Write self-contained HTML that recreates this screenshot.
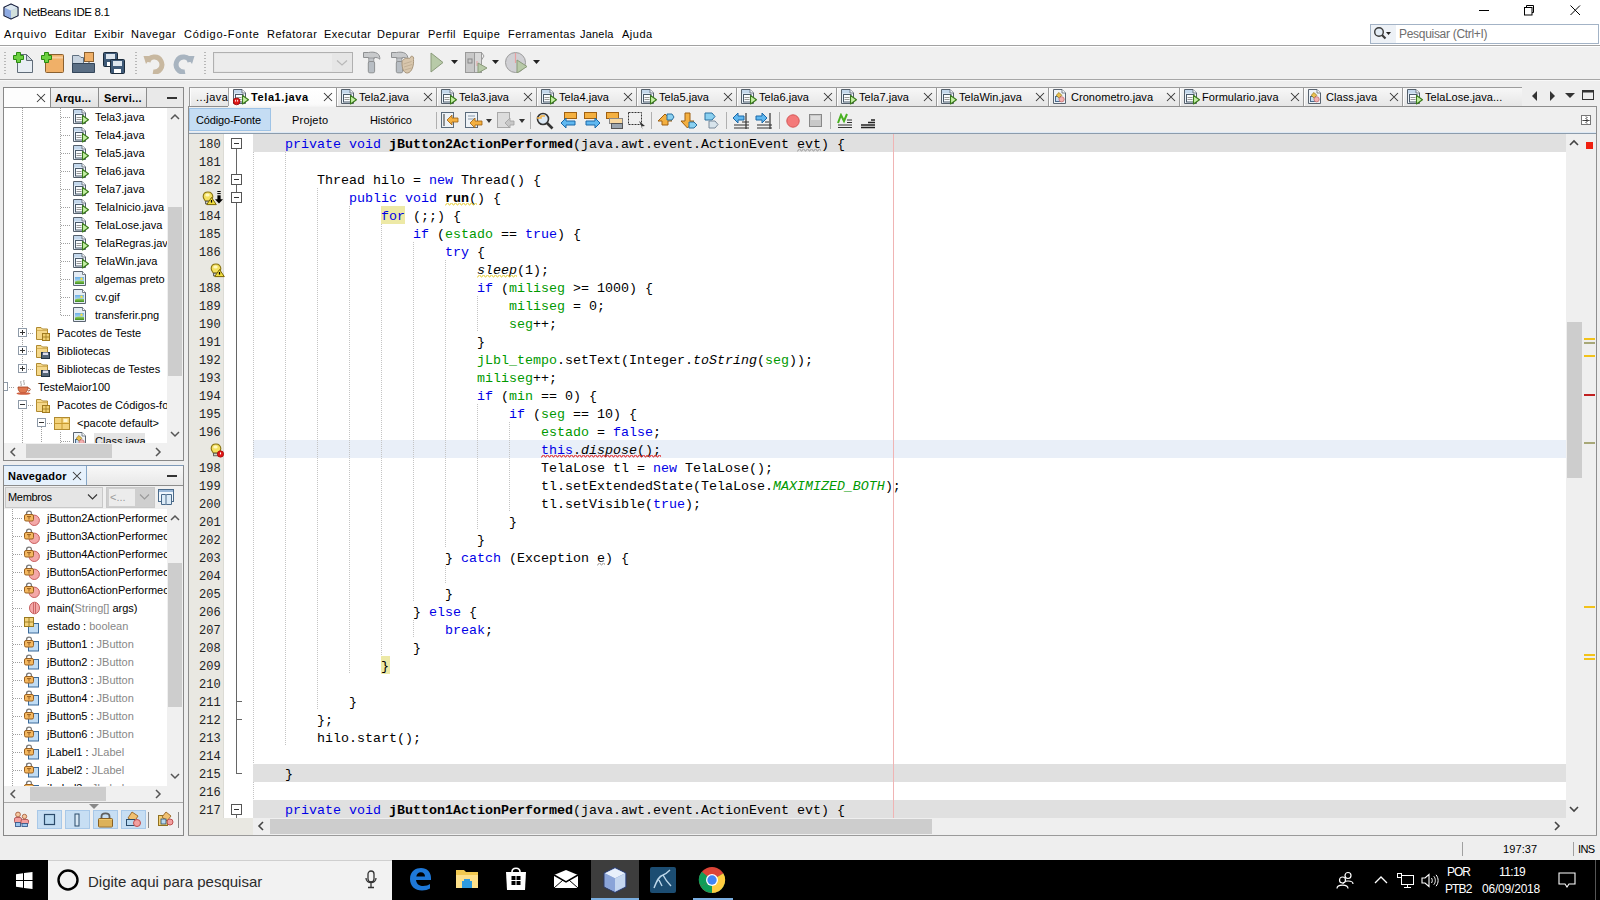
<!DOCTYPE html>
<html><head><meta charset="utf-8"><title>NetBeans IDE 8.1</title>
<style>
html,body{margin:0;padding:0;width:1600px;height:900px;overflow:hidden;background:#eeeeee}
body{position:relative;font-family:"Liberation Sans", sans-serif;}
body>div,body>svg{position:absolute;white-space:pre;box-sizing:border-box}
.k{color:#0000e6}
.f{color:#009900}
.i{font-style:italic}
.b{font-weight:bold}
</style></head><body>
<div style="left:0px;top:0px;width:1600px;height:45px;background:#fff"></div>
<div style="left:0px;top:45px;width:1600px;height:1px;background:#a2a2a2"></div>
<div style="left:0px;top:46px;width:1600px;height:1px;background:#fff"></div>
<div style="left:0px;top:47px;width:1600px;height:32px;background:#f0f0f0"></div>
<div style="left:0px;top:79px;width:1600px;height:1px;background:#a6a6a6"></div>
<div style="left:0px;top:80px;width:1600px;height:1px;background:#f8f8f8"></div>
<div style="left:0px;top:81px;width:1600px;height:779px;background:#eeeeee"></div>
<svg style="left:2px;top:2px;" width="18" height="18" viewBox="0 0 18 18"><path d="M9 2 L16 5.3 V13.7 L9 17 L2 13.7 V5.3 Z" fill="#b8cae8" stroke="#1c2440" stroke-width="1.3" stroke-linejoin="round"/><path d="M9 2.8 L15.3 5.6 L9 8.6 L2.7 5.6 Z" fill="#dde8f0"/><path d="M9 8.8 L15.3 5.9 V13.4 L9 16.3 Z" fill="#d2e0dc"/><path d="M9 8.8 V16.3 L2.7 13.4 V5.9 Z" fill="#8eaae2"/></svg>
<div style="left:23px;top:6px;font-family:'Liberation Sans', sans-serif;font-size:11.5px;line-height:13.800px;letter-spacing:-0.35px;color:#000">NetBeans IDE 8.1</div>
<div style="left:1479px;top:10px;width:10px;height:1px;background:#000"></div>
<svg style="left:1524px;top:5px;" width="11" height="11" viewBox="0 0 11 11"><rect x="0.5" y="2.5" width="7.5" height="7.5" fill="none" stroke="#000"/><path d="M2.5 2.5 V0.5 H9.5 V7.5 H8" fill="none" stroke="#000"/></svg>
<svg style="left:1570px;top:5px;" width="11" height="11" viewBox="0 0 11 11"><path d="M0.5 0.5 L10 10 M10 0.5 L0.5 10" stroke="#000" stroke-width="1"/></svg>
<div style="left:4px;top:28px;font-family:'Liberation Sans', sans-serif;font-size:11px;line-height:13.200px;letter-spacing:0.85px;color:#000">Arquivo</div>
<div style="left:55px;top:28px;font-family:'Liberation Sans', sans-serif;font-size:11px;line-height:13.200px;letter-spacing:0.5px;color:#000">Editar</div>
<div style="left:94px;top:28px;font-family:'Liberation Sans', sans-serif;font-size:11px;line-height:13.200px;letter-spacing:0.5px;color:#000">Exibir</div>
<div style="left:131px;top:28px;font-family:'Liberation Sans', sans-serif;font-size:11px;line-height:13.200px;letter-spacing:0.5px;color:#000">Navegar</div>
<div style="left:184px;top:28px;font-family:'Liberation Sans', sans-serif;font-size:11px;line-height:13.200px;letter-spacing:0.75px;color:#000">Código-Fonte</div>
<div style="left:267px;top:28px;font-family:'Liberation Sans', sans-serif;font-size:11px;line-height:13.200px;letter-spacing:0.5px;color:#000">Refatorar</div>
<div style="left:324px;top:28px;font-family:'Liberation Sans', sans-serif;font-size:11px;line-height:13.200px;letter-spacing:0.5px;color:#000">Executar</div>
<div style="left:377px;top:28px;font-family:'Liberation Sans', sans-serif;font-size:11px;line-height:13.200px;letter-spacing:0.5px;color:#000">Depurar</div>
<div style="left:428px;top:28px;font-family:'Liberation Sans', sans-serif;font-size:11px;line-height:13.200px;letter-spacing:0.5px;color:#000">Perfil</div>
<div style="left:463px;top:28px;font-family:'Liberation Sans', sans-serif;font-size:11px;line-height:13.200px;letter-spacing:0.5px;color:#000">Equipe</div>
<div style="left:508px;top:28px;font-family:'Liberation Sans', sans-serif;font-size:11px;line-height:13.200px;letter-spacing:0.5px;color:#000">Ferramentas</div>
<div style="left:580px;top:28px;font-family:'Liberation Sans', sans-serif;font-size:11px;line-height:13.200px;letter-spacing:0.2px;color:#000">Janela</div>
<div style="left:622px;top:28px;font-family:'Liberation Sans', sans-serif;font-size:11px;line-height:13.200px;letter-spacing:0.5px;color:#000">Ajuda</div>
<div style="left:1370px;top:24px;width:229px;height:20px;background:#fff;border:1px solid #a3b3c6"></div>
<div style="left:1371px;top:25px;width:25px;height:18px;background:#edf1f6"></div>
<svg style="left:1373px;top:26px;" width="22" height="15" viewBox="0 0 22 15"><circle cx="6" cy="6" r="4.3" fill="#e3ecf5" stroke="#3a3a3a" stroke-width="1.4"/><path d="M9 9 L12.5 12.5" stroke="#3a3a3a" stroke-width="2.2"/><path d="M13 6 L18 6 L15.5 9 Z" fill="#222"/></svg>
<div style="left:1399px;top:27px;font-family:'Liberation Sans', sans-serif;font-size:12px;line-height:14.400px;color:#6d6d6d;letter-spacing:-0.3px">Pesquisar (Ctrl+I)</div>
<div style="left:4px;top:52px;width:2px;height:1px;background:#b8b8b8"></div>
<div style="left:4px;top:55px;width:2px;height:1px;background:#b8b8b8"></div>
<div style="left:4px;top:58px;width:2px;height:1px;background:#b8b8b8"></div>
<div style="left:4px;top:61px;width:2px;height:1px;background:#b8b8b8"></div>
<div style="left:4px;top:64px;width:2px;height:1px;background:#b8b8b8"></div>
<div style="left:4px;top:67px;width:2px;height:1px;background:#b8b8b8"></div>
<div style="left:4px;top:70px;width:2px;height:1px;background:#b8b8b8"></div>
<div style="left:4px;top:73px;width:2px;height:1px;background:#b8b8b8"></div>
<div style="left:135px;top:52px;width:2px;height:1px;background:#b8b8b8"></div>
<div style="left:135px;top:55px;width:2px;height:1px;background:#b8b8b8"></div>
<div style="left:135px;top:58px;width:2px;height:1px;background:#b8b8b8"></div>
<div style="left:135px;top:61px;width:2px;height:1px;background:#b8b8b8"></div>
<div style="left:135px;top:64px;width:2px;height:1px;background:#b8b8b8"></div>
<div style="left:135px;top:67px;width:2px;height:1px;background:#b8b8b8"></div>
<div style="left:135px;top:70px;width:2px;height:1px;background:#b8b8b8"></div>
<div style="left:135px;top:73px;width:2px;height:1px;background:#b8b8b8"></div>
<div style="left:204px;top:52px;width:2px;height:1px;background:#b8b8b8"></div>
<div style="left:204px;top:55px;width:2px;height:1px;background:#b8b8b8"></div>
<div style="left:204px;top:58px;width:2px;height:1px;background:#b8b8b8"></div>
<div style="left:204px;top:61px;width:2px;height:1px;background:#b8b8b8"></div>
<div style="left:204px;top:64px;width:2px;height:1px;background:#b8b8b8"></div>
<div style="left:204px;top:67px;width:2px;height:1px;background:#b8b8b8"></div>
<div style="left:204px;top:70px;width:2px;height:1px;background:#b8b8b8"></div>
<div style="left:204px;top:73px;width:2px;height:1px;background:#b8b8b8"></div>
<svg style="left:13px;top:52px;" width="21" height="21" viewBox="0 0 21 21"><path d="M4.5 2.5 H13.5 L19.5 8.5 V20.5 H4.5 Z" fill="#e8eef4" stroke="#606c78"/><path d="M13.5 2.5 V8.5 H19.5 Z" fill="#d0d8e0" stroke="#606c78" stroke-linejoin="round"/><path d="M3.5 0.5 H7.5 V3.5 H10.5 V7.5 H7.5 V10.5 H3.5 V7.5 H0.5 V3.5 H3.5 Z" fill="#6cd040" stroke="#2a8a10"/></svg>
<svg style="left:41px;top:52px;" width="23" height="21" viewBox="0 0 23 21"><rect x="4.5" y="2.5" width="18" height="18" rx="1" fill="#f0b068" stroke="#8a6030"/><path d="M5 5.5 H22" stroke="#f8d0a0" stroke-width="2"/><path d="M3.5 0.5 H7.5 V3.5 H10.5 V7.5 H7.5 V10.5 H3.5 V7.5 H0.5 V3.5 H3.5 Z" fill="#6cd040" stroke="#2a8a10"/></svg>
<svg style="left:72px;top:52px;" width="23" height="21" viewBox="0 0 23 21"><path d="M0.5 3.5 H7 L9 5.5 H11.5 V20.5 H0.5 Z" fill="#c8d4e0" stroke="#607080"/><path d="M0.5 11.5 H22.5 V20.5 H0.5 Z" fill="#5a6e84" stroke="#34465a"/><rect x="12.5" y="0.5" width="9" height="9" fill="#f0b068" stroke="#8a6030"/><path d="M17 9.5 V11.5" stroke="#555"/></svg>
<svg style="left:103px;top:52px;" width="23" height="23" viewBox="0 0 23 23"><rect x="0.5" y="0.5" width="14" height="14" rx="1" fill="#3e5a78" stroke="#1a2a3a"/><rect x="3" y="2" width="9" height="5" fill="#dde6ee"/><rect x="4" y="10" width="7" height="4" fill="#fff"/><rect x="7.5" y="7.5" width="14" height="14" rx="1" fill="#3e5a78" stroke="#1a2a3a"/><rect x="10" y="9" width="9" height="5" fill="#dde6ee"/><rect x="11" y="17" width="7" height="4" fill="#fff"/></svg>
<svg style="left:143px;top:52px;" width="22" height="22" viewBox="0 0 22 22"><path d="M5 10 C6 4 15 3 18 9 C21 15 16 21 10 20" fill="none" stroke="#c8b8a0" stroke-width="5"/><path d="M0.5 4 L9 4 L3 12 Z" fill="#c8b8a0"/></svg>
<svg style="left:173px;top:52px;" width="22" height="22" viewBox="0 0 22 22"><path d="M17 10 C16 4 7 3 4 9 C1 15 6 21 12 20" fill="none" stroke="#a8b4c0" stroke-width="5"/><path d="M21.5 4 L13 4 L19 12 Z" fill="#a8b4c0"/></svg>
<div style="left:213px;top:52px;width:140px;height:21px;background:#e6e6e6;border:1px solid #b0b0b0"></div>
<div style="left:215px;top:54px;width:117px;height:17px;background:#ececec"></div>
<svg style="left:336px;top:59px;" width="12" height="8" viewBox="0 0 12 8"><path d="M1 1.5 L6 6 L11 1.5" fill="none" stroke="#b8b8b8" stroke-width="1.2"/></svg>
<svg style="left:362px;top:51px;" width="20" height="23" viewBox="0 0 20 23"><path d="M1.5 1.5 H6.5 C9 1 13 0.8 15.5 2.5 C17 3.6 18 5.5 17.8 8.2 C16.3 6.8 14.5 6.3 12.3 6.5 V7.5 H6.7 V6.5 H1.5 Z" fill="#c8cacc" stroke="#8e9092"/><rect x="6.8" y="7" width="5" height="4" fill="#c0c4c8" stroke="#8e9092" stroke-width="0.8"/><rect x="6.3" y="10.5" width="6.3" height="11.3" rx="1.5" fill="#b8bec4" stroke="#8e9092"/></svg>
<svg style="left:390px;top:51px;" width="26" height="23" viewBox="0 0 26 23"><path d="M1.5 1.5 H6.5 C9 1 13 0.8 15.5 2.5 C17 3.6 18 5.5 17.8 8.2 C16.3 6.8 14.5 6.3 12.3 6.5 V7.5 H6.7 V6.5 H1.5 Z" fill="#c8cacc" stroke="#8e9092"/><rect x="6.8" y="7" width="5" height="4" fill="#c0c4c8" stroke="#8e9092" stroke-width="0.8"/><rect x="6.3" y="10.5" width="6.3" height="11.3" rx="1.5" fill="#b8bec4" stroke="#8e9092"/><path d="M12 12 C12 8 16 6.5 19.5 7.5 L21.5 5 C23 5 24 6.5 23.5 8.5 C24 14 22 21.5 17.5 22 C13.5 22.3 12 17 12 12 Z" fill="#d8c6ac" stroke="#a8967c"/><path d="M13.5 13 L21.5 10.5 M14 16 L22 13.5 M14.5 19 L21.5 17" stroke="#b8a68c" stroke-width="0.7"/></svg>
<svg style="left:430px;top:52px;" width="14" height="21" viewBox="0 0 14 21"><path d="M1 1 L13 10.5 L1 20 Z" fill="#b8caa8" stroke="#8a9a7a"/></svg>
<svg style="left:451px;top:60px;" width="7" height="4" viewBox="0 0 7 4"><path d="M0 0 H7 L3.5 4 Z" fill="#222"/></svg>
<svg style="left:465px;top:52px;" width="23" height="21" viewBox="0 0 23 21"><rect x="0.5" y="0.5" width="9" height="20" fill="#c8c8c8" stroke="#9a9a9a"/><rect x="9.5" y="0.5" width="7" height="20" fill="#d8d8d8" stroke="#9a9a9a"/><path d="M16.5 0.5 L19 4 L16.5 8" fill="none" stroke="#9a9a9a"/><rect x="3" y="7" width="4" height="4" fill="none" stroke="#888"/><path d="M12 9 V14" stroke="#e8a0a0"/><path d="M13 11 L22 16 L13 21 Z" fill="#b8caa8" stroke="#8a9a7a"/></svg>
<svg style="left:492px;top:60px;" width="7" height="4" viewBox="0 0 7 4"><path d="M0 0 H7 L3.5 4 Z" fill="#222"/></svg>
<svg style="left:505px;top:52px;" width="23" height="21" viewBox="0 0 23 21"><circle cx="10.5" cy="10.5" r="10" fill="#d0d0d4" stroke="#9a9a9a"/><path d="M10.5 1 V11" stroke="#e8a0a0" stroke-width="1.2"/><path d="M12 8 L22 14.5 L12 21 Z" fill="#b8caa8" stroke="#8a9a7a"/></svg>
<svg style="left:533px;top:60px;" width="7" height="4" viewBox="0 0 7 4"><path d="M0 0 H7 L3.5 4 Z" fill="#222"/></svg>
<div style="left:3px;top:87px;width:181px;height:374px;background:#fff;border:1px solid #888"></div>
<div style="left:4px;top:88px;width:179px;height:19px;background:#e9e9e9"></div>
<div style="left:4px;top:107px;width:179px;height:1px;background:#8c8c8c"></div>
<div style="left:4px;top:88px;width:47px;height:19px;background:#fdfdfd;border-right:1px solid #8c8c8c"></div>
<svg style="left:36px;top:93px;" width="10" height="10" viewBox="0 0 10 10"><path d="M1 1 L9 9 M9 1 L1 9" stroke="#333" stroke-width="1.05"/></svg>
<div style="left:51px;top:88px;width:48px;height:19px;background:linear-gradient(#f2f2f2,#e2e2e2);border-right:1px solid #8c8c8c"></div>
<div style="left:55px;top:92px;font-family:'Liberation Sans', sans-serif;font-size:11px;line-height:13.200px;font-weight:bold;color:#000;letter-spacing:0.2px">Arqu...</div>
<div style="left:99px;top:88px;width:48px;height:19px;background:linear-gradient(#f2f2f2,#e2e2e2);border-right:1px solid #8c8c8c"></div>
<div style="left:104px;top:92px;font-family:'Liberation Sans', sans-serif;font-size:11px;line-height:13.200px;font-weight:bold;color:#000;letter-spacing:0.2px">Servi...</div>
<div style="left:167px;top:97px;width:10px;height:2px;background:#333"></div>
<div style="left:4px;top:108px;width:163px;height:335px;background:#fff"></div>
<div style="left:22px;top:108px;width:1px;height:265px;background:repeating-linear-gradient(to bottom,#a0a0a0 0 1px,transparent 1px 2px)"></div>
<div style="left:22px;top:410px;width:1px;height:33px;background:repeating-linear-gradient(to bottom,#a0a0a0 0 1px,transparent 1px 2px)"></div>
<div style="left:60px;top:108px;width:1px;height:207px;background:repeating-linear-gradient(to bottom,#a0a0a0 0 1px,transparent 1px 2px)"></div>
<div style="left:61px;top:117px;width:10px;height:1px;background:repeating-linear-gradient(to right,#a0a0a0 0 1px,transparent 1px 2px)"></div>
<svg style="left:73px;top:109px;" width="17" height="17" viewBox="0 0 17 17"><path d="M0.5 0.5 H9 L12.5 4 V14.5 H0.5 Z" fill="#eef4fa" stroke="#55606c"/><rect x="1" y="1" width="8" height="3.5" fill="#c4d8ec"/><path d="M9 0.5 V4 H12.5" fill="#f4f8fc" stroke="#55606c" stroke-width="0.8"/><rect x="2.5" y="5.5" width="7.5" height="7.5" fill="#fafcfe" stroke="#4a5a6a"/><path d="M3.5 8.5 H8.5 M3.5 10.5 H8.5" stroke="#8a8a8a" stroke-width="0.9"/><path d="M9.5 6.5 L15.5 10.7 L9.5 15 Z" fill="#c4f0a4" stroke="#3a7a1a" stroke-width="1.1" stroke-linejoin="round"/></svg>
<div style="left:95px;top:111px;font-family:'Liberation Sans', sans-serif;font-size:11px;line-height:13.200px;color:#000;letter-spacing:0px">Tela3.java</div>
<div style="left:61px;top:135px;width:10px;height:1px;background:repeating-linear-gradient(to right,#a0a0a0 0 1px,transparent 1px 2px)"></div>
<svg style="left:73px;top:127px;" width="17" height="17" viewBox="0 0 17 17"><path d="M0.5 0.5 H9 L12.5 4 V14.5 H0.5 Z" fill="#eef4fa" stroke="#55606c"/><rect x="1" y="1" width="8" height="3.5" fill="#c4d8ec"/><path d="M9 0.5 V4 H12.5" fill="#f4f8fc" stroke="#55606c" stroke-width="0.8"/><rect x="2.5" y="5.5" width="7.5" height="7.5" fill="#fafcfe" stroke="#4a5a6a"/><path d="M3.5 8.5 H8.5 M3.5 10.5 H8.5" stroke="#8a8a8a" stroke-width="0.9"/><path d="M9.5 6.5 L15.5 10.7 L9.5 15 Z" fill="#c4f0a4" stroke="#3a7a1a" stroke-width="1.1" stroke-linejoin="round"/></svg>
<div style="left:95px;top:129px;font-family:'Liberation Sans', sans-serif;font-size:11px;line-height:13.200px;color:#000;letter-spacing:0px">Tela4.java</div>
<div style="left:61px;top:153px;width:10px;height:1px;background:repeating-linear-gradient(to right,#a0a0a0 0 1px,transparent 1px 2px)"></div>
<svg style="left:73px;top:145px;" width="17" height="17" viewBox="0 0 17 17"><path d="M0.5 0.5 H9 L12.5 4 V14.5 H0.5 Z" fill="#eef4fa" stroke="#55606c"/><rect x="1" y="1" width="8" height="3.5" fill="#c4d8ec"/><path d="M9 0.5 V4 H12.5" fill="#f4f8fc" stroke="#55606c" stroke-width="0.8"/><rect x="2.5" y="5.5" width="7.5" height="7.5" fill="#fafcfe" stroke="#4a5a6a"/><path d="M3.5 8.5 H8.5 M3.5 10.5 H8.5" stroke="#8a8a8a" stroke-width="0.9"/><path d="M9.5 6.5 L15.5 10.7 L9.5 15 Z" fill="#c4f0a4" stroke="#3a7a1a" stroke-width="1.1" stroke-linejoin="round"/></svg>
<div style="left:95px;top:147px;font-family:'Liberation Sans', sans-serif;font-size:11px;line-height:13.200px;color:#000;letter-spacing:0px">Tela5.java</div>
<div style="left:61px;top:171px;width:10px;height:1px;background:repeating-linear-gradient(to right,#a0a0a0 0 1px,transparent 1px 2px)"></div>
<svg style="left:73px;top:163px;" width="17" height="17" viewBox="0 0 17 17"><path d="M0.5 0.5 H9 L12.5 4 V14.5 H0.5 Z" fill="#eef4fa" stroke="#55606c"/><rect x="1" y="1" width="8" height="3.5" fill="#c4d8ec"/><path d="M9 0.5 V4 H12.5" fill="#f4f8fc" stroke="#55606c" stroke-width="0.8"/><rect x="2.5" y="5.5" width="7.5" height="7.5" fill="#fafcfe" stroke="#4a5a6a"/><path d="M3.5 8.5 H8.5 M3.5 10.5 H8.5" stroke="#8a8a8a" stroke-width="0.9"/><path d="M9.5 6.5 L15.5 10.7 L9.5 15 Z" fill="#c4f0a4" stroke="#3a7a1a" stroke-width="1.1" stroke-linejoin="round"/></svg>
<div style="left:95px;top:165px;font-family:'Liberation Sans', sans-serif;font-size:11px;line-height:13.200px;color:#000;letter-spacing:0px">Tela6.java</div>
<div style="left:61px;top:189px;width:10px;height:1px;background:repeating-linear-gradient(to right,#a0a0a0 0 1px,transparent 1px 2px)"></div>
<svg style="left:73px;top:181px;" width="17" height="17" viewBox="0 0 17 17"><path d="M0.5 0.5 H9 L12.5 4 V14.5 H0.5 Z" fill="#eef4fa" stroke="#55606c"/><rect x="1" y="1" width="8" height="3.5" fill="#c4d8ec"/><path d="M9 0.5 V4 H12.5" fill="#f4f8fc" stroke="#55606c" stroke-width="0.8"/><rect x="2.5" y="5.5" width="7.5" height="7.5" fill="#fafcfe" stroke="#4a5a6a"/><path d="M3.5 8.5 H8.5 M3.5 10.5 H8.5" stroke="#8a8a8a" stroke-width="0.9"/><path d="M9.5 6.5 L15.5 10.7 L9.5 15 Z" fill="#c4f0a4" stroke="#3a7a1a" stroke-width="1.1" stroke-linejoin="round"/></svg>
<div style="left:95px;top:183px;font-family:'Liberation Sans', sans-serif;font-size:11px;line-height:13.200px;color:#000;letter-spacing:0px">Tela7.java</div>
<div style="left:61px;top:207px;width:10px;height:1px;background:repeating-linear-gradient(to right,#a0a0a0 0 1px,transparent 1px 2px)"></div>
<svg style="left:73px;top:199px;" width="17" height="17" viewBox="0 0 17 17"><path d="M0.5 0.5 H9 L12.5 4 V14.5 H0.5 Z" fill="#eef4fa" stroke="#55606c"/><rect x="1" y="1" width="8" height="3.5" fill="#c4d8ec"/><path d="M9 0.5 V4 H12.5" fill="#f4f8fc" stroke="#55606c" stroke-width="0.8"/><rect x="2.5" y="5.5" width="7.5" height="7.5" fill="#fafcfe" stroke="#4a5a6a"/><path d="M3.5 8.5 H8.5 M3.5 10.5 H8.5" stroke="#8a8a8a" stroke-width="0.9"/><path d="M9.5 6.5 L15.5 10.7 L9.5 15 Z" fill="#c4f0a4" stroke="#3a7a1a" stroke-width="1.1" stroke-linejoin="round"/></svg>
<div style="left:95px;top:201px;font-family:'Liberation Sans', sans-serif;font-size:11px;line-height:13.200px;color:#000;letter-spacing:0px">TelaInicio.java</div>
<div style="left:61px;top:225px;width:10px;height:1px;background:repeating-linear-gradient(to right,#a0a0a0 0 1px,transparent 1px 2px)"></div>
<svg style="left:73px;top:217px;" width="17" height="17" viewBox="0 0 17 17"><path d="M0.5 0.5 H9 L12.5 4 V14.5 H0.5 Z" fill="#eef4fa" stroke="#55606c"/><rect x="1" y="1" width="8" height="3.5" fill="#c4d8ec"/><path d="M9 0.5 V4 H12.5" fill="#f4f8fc" stroke="#55606c" stroke-width="0.8"/><rect x="2.5" y="5.5" width="7.5" height="7.5" fill="#fafcfe" stroke="#4a5a6a"/><path d="M3.5 8.5 H8.5 M3.5 10.5 H8.5" stroke="#8a8a8a" stroke-width="0.9"/><path d="M9.5 6.5 L15.5 10.7 L9.5 15 Z" fill="#c4f0a4" stroke="#3a7a1a" stroke-width="1.1" stroke-linejoin="round"/></svg>
<div style="left:95px;top:219px;font-family:'Liberation Sans', sans-serif;font-size:11px;line-height:13.200px;color:#000;letter-spacing:0px">TelaLose.java</div>
<div style="left:61px;top:243px;width:10px;height:1px;background:repeating-linear-gradient(to right,#a0a0a0 0 1px,transparent 1px 2px)"></div>
<svg style="left:73px;top:235px;" width="17" height="17" viewBox="0 0 17 17"><path d="M0.5 0.5 H9 L12.5 4 V14.5 H0.5 Z" fill="#eef4fa" stroke="#55606c"/><rect x="1" y="1" width="8" height="3.5" fill="#c4d8ec"/><path d="M9 0.5 V4 H12.5" fill="#f4f8fc" stroke="#55606c" stroke-width="0.8"/><rect x="2.5" y="5.5" width="7.5" height="7.5" fill="#fafcfe" stroke="#4a5a6a"/><path d="M3.5 8.5 H8.5 M3.5 10.5 H8.5" stroke="#8a8a8a" stroke-width="0.9"/><path d="M9.5 6.5 L15.5 10.7 L9.5 15 Z" fill="#c4f0a4" stroke="#3a7a1a" stroke-width="1.1" stroke-linejoin="round"/></svg>
<div style="left:95px;top:237px;font-family:'Liberation Sans', sans-serif;font-size:11px;line-height:13.200px;color:#000;letter-spacing:0px">TelaRegras.jav</div>
<div style="left:61px;top:261px;width:10px;height:1px;background:repeating-linear-gradient(to right,#a0a0a0 0 1px,transparent 1px 2px)"></div>
<svg style="left:73px;top:253px;" width="17" height="17" viewBox="0 0 17 17"><path d="M0.5 0.5 H9 L12.5 4 V14.5 H0.5 Z" fill="#eef4fa" stroke="#55606c"/><rect x="1" y="1" width="8" height="3.5" fill="#c4d8ec"/><path d="M9 0.5 V4 H12.5" fill="#f4f8fc" stroke="#55606c" stroke-width="0.8"/><rect x="2.5" y="5.5" width="7.5" height="7.5" fill="#fafcfe" stroke="#4a5a6a"/><path d="M3.5 8.5 H8.5 M3.5 10.5 H8.5" stroke="#8a8a8a" stroke-width="0.9"/><path d="M9.5 6.5 L15.5 10.7 L9.5 15 Z" fill="#c4f0a4" stroke="#3a7a1a" stroke-width="1.1" stroke-linejoin="round"/></svg>
<div style="left:95px;top:255px;font-family:'Liberation Sans', sans-serif;font-size:11px;line-height:13.200px;color:#000;letter-spacing:0px">TelaWin.java</div>
<div style="left:61px;top:279px;width:10px;height:1px;background:repeating-linear-gradient(to right,#a0a0a0 0 1px,transparent 1px 2px)"></div>
<svg style="left:73px;top:271px;" width="16" height="16" viewBox="0 0 16 16"><defs><linearGradient id="sky" x1="0" y1="0" x2="0" y2="1"><stop offset="0" stop-color="#6ab0e8"/><stop offset="1" stop-color="#d8ecf8"/></linearGradient><linearGradient id="grs" x1="0" y1="0" x2="0" y2="1"><stop offset="0" stop-color="#a0d860"/><stop offset="1" stop-color="#3a8a20"/></linearGradient></defs><path d="M0.5 0.5 H9.5 L12.5 3.5 V14.5 H0.5 Z" fill="#e4ecf4" stroke="#5a6470"/><path d="M9.5 0.5 V3.5 H12.5" fill="#fff" stroke="#5a6470" stroke-width="0.8"/><rect x="2" y="6" width="9" height="7" fill="url(#sky)"/><path d="M2 13 V10.5 C5 9 8 9.5 11 10 V13 Z" fill="url(#grs)"/><circle cx="8.5" cy="7.8" r="1.2" fill="#f8e040"/></svg>
<div style="left:95px;top:273px;font-family:'Liberation Sans', sans-serif;font-size:11px;line-height:13.200px;color:#000;letter-spacing:0px">algemas preto</div>
<div style="left:61px;top:297px;width:10px;height:1px;background:repeating-linear-gradient(to right,#a0a0a0 0 1px,transparent 1px 2px)"></div>
<svg style="left:73px;top:289px;" width="16" height="16" viewBox="0 0 16 16"><defs><linearGradient id="sky" x1="0" y1="0" x2="0" y2="1"><stop offset="0" stop-color="#6ab0e8"/><stop offset="1" stop-color="#d8ecf8"/></linearGradient><linearGradient id="grs" x1="0" y1="0" x2="0" y2="1"><stop offset="0" stop-color="#a0d860"/><stop offset="1" stop-color="#3a8a20"/></linearGradient></defs><path d="M0.5 0.5 H9.5 L12.5 3.5 V14.5 H0.5 Z" fill="#e4ecf4" stroke="#5a6470"/><path d="M9.5 0.5 V3.5 H12.5" fill="#fff" stroke="#5a6470" stroke-width="0.8"/><rect x="2" y="6" width="9" height="7" fill="url(#sky)"/><path d="M2 13 V10.5 C5 9 8 9.5 11 10 V13 Z" fill="url(#grs)"/><circle cx="8.5" cy="7.8" r="1.2" fill="#f8e040"/></svg>
<div style="left:95px;top:291px;font-family:'Liberation Sans', sans-serif;font-size:11px;line-height:13.200px;color:#000;letter-spacing:0px">cv.gif</div>
<div style="left:61px;top:315px;width:10px;height:1px;background:repeating-linear-gradient(to right,#a0a0a0 0 1px,transparent 1px 2px)"></div>
<svg style="left:73px;top:307px;" width="16" height="16" viewBox="0 0 16 16"><defs><linearGradient id="sky" x1="0" y1="0" x2="0" y2="1"><stop offset="0" stop-color="#6ab0e8"/><stop offset="1" stop-color="#d8ecf8"/></linearGradient><linearGradient id="grs" x1="0" y1="0" x2="0" y2="1"><stop offset="0" stop-color="#a0d860"/><stop offset="1" stop-color="#3a8a20"/></linearGradient></defs><path d="M0.5 0.5 H9.5 L12.5 3.5 V14.5 H0.5 Z" fill="#e4ecf4" stroke="#5a6470"/><path d="M9.5 0.5 V3.5 H12.5" fill="#fff" stroke="#5a6470" stroke-width="0.8"/><rect x="2" y="6" width="9" height="7" fill="url(#sky)"/><path d="M2 13 V10.5 C5 9 8 9.5 11 10 V13 Z" fill="url(#grs)"/><circle cx="8.5" cy="7.8" r="1.2" fill="#f8e040"/></svg>
<div style="left:95px;top:309px;font-family:'Liberation Sans', sans-serif;font-size:11px;line-height:13.200px;color:#000;letter-spacing:0px">transferir.png</div>
<svg style="left:18px;top:328px;" width="9" height="9" viewBox="0 0 9 9"><rect x="0.5" y="0.5" width="8" height="8" fill="#fff" stroke="#8e9aa8"/><path d="M2 4.5 H7" stroke="#333"/><path d="M4.5 2 V7" stroke="#333"/></svg>
<div style="left:28px;top:333px;width:6px;height:1px;background:repeating-linear-gradient(to right,#a0a0a0 0 1px,transparent 1px 2px)"></div>
<svg style="left:35px;top:325px;" width="16" height="16" viewBox="0 0 16 16"><path d="M1.5 2.5 H6 L7.5 4 H12.5 V14.5 H1.5 Z" fill="#f5d88a" stroke="#b08a30"/><path d="M1.5 5.5 H12.5" stroke="#c8a040" stroke-width="0.7"/><rect x="7.5" y="8.5" width="7" height="7" fill="#f0d070" stroke="#a07a20"/><path d="M7.5 12 H14.5 M11 8.5 V15.5" stroke="#a07a20" stroke-width="0.8"/></svg>
<div style="left:57px;top:327px;font-family:'Liberation Sans', sans-serif;font-size:11px;line-height:13.200px;color:#000;letter-spacing:0px">Pacotes de Teste</div>
<svg style="left:18px;top:346px;" width="9" height="9" viewBox="0 0 9 9"><rect x="0.5" y="0.5" width="8" height="8" fill="#fff" stroke="#8e9aa8"/><path d="M2 4.5 H7" stroke="#333"/><path d="M4.5 2 V7" stroke="#333"/></svg>
<div style="left:28px;top:351px;width:6px;height:1px;background:repeating-linear-gradient(to right,#a0a0a0 0 1px,transparent 1px 2px)"></div>
<svg style="left:35px;top:343px;" width="16" height="16" viewBox="0 0 16 16"><path d="M1.5 2.5 H6 L7.5 4 H12.5 V14.5 H1.5 Z" fill="#f5d88a" stroke="#b08a30"/><path d="M1.5 5.5 H12.5" stroke="#c8a040" stroke-width="0.7"/><rect x="6.5" y="9.5" width="8" height="6" fill="#556677" stroke="#223344"/><rect x="8" y="9.5" width="5" height="2.5" fill="#dde"/></svg>
<div style="left:57px;top:345px;font-family:'Liberation Sans', sans-serif;font-size:11px;line-height:13.200px;color:#000;letter-spacing:0px">Bibliotecas</div>
<svg style="left:18px;top:364px;" width="9" height="9" viewBox="0 0 9 9"><rect x="0.5" y="0.5" width="8" height="8" fill="#fff" stroke="#8e9aa8"/><path d="M2 4.5 H7" stroke="#333"/><path d="M4.5 2 V7" stroke="#333"/></svg>
<div style="left:28px;top:369px;width:6px;height:1px;background:repeating-linear-gradient(to right,#a0a0a0 0 1px,transparent 1px 2px)"></div>
<svg style="left:35px;top:361px;" width="16" height="16" viewBox="0 0 16 16"><path d="M1.5 2.5 H6 L7.5 4 H12.5 V14.5 H1.5 Z" fill="#f5d88a" stroke="#b08a30"/><path d="M1.5 5.5 H12.5" stroke="#c8a040" stroke-width="0.7"/><rect x="6.5" y="9.5" width="8" height="6" fill="#556677" stroke="#223344"/><rect x="8" y="9.5" width="5" height="2.5" fill="#dde"/></svg>
<div style="left:57px;top:363px;font-family:'Liberation Sans', sans-serif;font-size:11px;line-height:13.200px;color:#000;letter-spacing:0px">Bibliotecas de Testes</div>
<div style="left:4px;top:382px;width:4px;height:9px;background:#fff;border:1px solid #8e9aa8;border-left:none"></div>
<div style="left:9px;top:387px;width:6px;height:1px;background:repeating-linear-gradient(to right,#a0a0a0 0 1px,transparent 1px 2px)"></div>
<svg style="left:16px;top:379px;" width="17" height="16" viewBox="0 0 17 16"><path d="M2 8 H12 C12 12 10 14 7 14 C4 14 2 12 2 8 Z" fill="#e07850" stroke="#a04020" stroke-width="0.8"/><path d="M12 9 C15 9 15 12 12 12" fill="none" stroke="#a04020"/><ellipse cx="7.5" cy="14.5" rx="7" ry="1.3" fill="#d06040"/><path d="M5 2 C4 4 6 5 5 7 M8 1 C7 3 9 4 8 6" stroke="#888" fill="none" stroke-width="0.8"/></svg>
<div style="left:38px;top:381px;font-family:'Liberation Sans', sans-serif;font-size:11px;line-height:13.200px;color:#000;letter-spacing:0px">TesteMaior100</div>
<svg style="left:18px;top:400px;" width="9" height="9" viewBox="0 0 9 9"><rect x="0.5" y="0.5" width="8" height="8" fill="#fff" stroke="#8e9aa8"/><path d="M2 4.5 H7" stroke="#333"/></svg>
<div style="left:28px;top:405px;width:6px;height:1px;background:repeating-linear-gradient(to right,#a0a0a0 0 1px,transparent 1px 2px)"></div>
<svg style="left:35px;top:397px;" width="16" height="16" viewBox="0 0 16 16"><path d="M1.5 2.5 H6 L7.5 4 H12.5 V14.5 H1.5 Z" fill="#f5d88a" stroke="#b08a30"/><path d="M1.5 5.5 H12.5" stroke="#c8a040" stroke-width="0.7"/><rect x="7.5" y="8.5" width="7" height="7" fill="#f0d070" stroke="#a07a20"/><path d="M7.5 12 H14.5 M11 8.5 V15.5" stroke="#a07a20" stroke-width="0.8"/></svg>
<div style="left:57px;top:399px;font-family:'Liberation Sans', sans-serif;font-size:11px;line-height:13.200px;color:#000;letter-spacing:0px">Pacotes de Códigos-fo</div>
<div style="left:41px;top:427px;width:1px;height:16px;background:repeating-linear-gradient(to bottom,#a0a0a0 0 1px,transparent 1px 2px)"></div>
<svg style="left:37px;top:418px;" width="9" height="9" viewBox="0 0 9 9"><rect x="0.5" y="0.5" width="8" height="8" fill="#fff" stroke="#8e9aa8"/><path d="M2 4.5 H7" stroke="#333"/></svg>
<div style="left:47px;top:423px;width:6px;height:1px;background:repeating-linear-gradient(to right,#a0a0a0 0 1px,transparent 1px 2px)"></div>
<svg style="left:54px;top:415px;" width="16" height="16" viewBox="0 0 16 16"><rect x="0.5" y="2.5" width="15" height="12" fill="#f3d27a" stroke="#b08a30"/><path d="M0.5 8.5 H15.5 M8 2.5 V14.5" stroke="#c89a30"/><rect x="9.5" y="4" width="4" height="3" fill="#fff6d0"/></svg>
<div style="left:77px;top:417px;font-family:'Liberation Sans', sans-serif;font-size:11px;line-height:13.200px;color:#000;letter-spacing:0px">&lt;pacote default&gt;</div>
<div style="left:60px;top:432px;width:1px;height:11px;background:repeating-linear-gradient(to bottom,#a0a0a0 0 1px,transparent 1px 2px)"></div>
<div style="left:61px;top:441px;width:10px;height:1px;background:repeating-linear-gradient(to right,#a0a0a0 0 1px,transparent 1px 2px)"></div>
<div style="left:94px;top:433px;width:51px;height:10px;background:#e4e4e4"></div>
<svg style="left:73px;top:432px;" width="17" height="17" viewBox="0 0 17 17"><path d="M0.5 0.5 H9 L12.5 4 V14.5 H0.5 Z" fill="#eef3f8" stroke="#5a6470"/><path d="M9 0.5 V4 H12.5" fill="#fafcfe" stroke="#5a6470" stroke-width="0.8"/><rect x="2.5" y="7.5" width="5" height="5" fill="#c8dcf0" stroke="#4a6a8a"/><path d="M6 3.5 L8.8 6.3 L6 9.1 L3.2 6.3 Z" fill="#e8c050" stroke="#9a7a20" stroke-width="0.8"/><circle cx="8.6" cy="10.3" r="2.6" fill="#f4b0b0" stroke="#c07070" stroke-width="0.8"/></svg>
<div style="left:95px;top:435px;font-family:'Liberation Sans', sans-serif;font-size:11px;line-height:13.200px;color:#000;letter-spacing:0px">Class.java</div>
<div style="left:4px;top:443px;width:163px;height:17px;background:#fff"></div>
<div style="left:167px;top:108px;width:16px;height:335px;background:#f0f0f0"></div>
<svg style="left:170px;top:113px;" width="10" height="8" viewBox="0 0 10 8"><path d="M1 6 L5 2 L9 6" fill="none" stroke="#555" stroke-width="1.5"/></svg>
<svg style="left:170px;top:430px;" width="10" height="8" viewBox="0 0 10 8"><path d="M1 2 L5 6 L9 2" fill="none" stroke="#555" stroke-width="1.5"/></svg>
<div style="left:168px;top:207px;width:14px;height:169px;background:#cdcdcd"></div>
<div style="left:4px;top:443px;width:179px;height:17px;background:#f0f0f0"></div>
<svg style="left:9px;top:447px;" width="8" height="10" viewBox="0 0 8 10"><path d="M6 1 L2 5 L6 9" fill="none" stroke="#555" stroke-width="1.5"/></svg>
<svg style="left:154px;top:447px;" width="8" height="10" viewBox="0 0 8 10"><path d="M2 1 L6 5 L2 9" fill="none" stroke="#555" stroke-width="1.5"/></svg>
<div style="left:26px;top:444px;width:86px;height:14px;background:#cdcdcd"></div>
<div style="left:3px;top:465px;width:181px;height:371px;background:#fff;border:1px solid #888;border-top-color:#7f9ab8"></div>
<div style="left:4px;top:466px;width:179px;height:19px;background:linear-gradient(#f8f8f8,#e8e8e8)"></div>
<div style="left:4px;top:466px;width:83px;height:19px;background:#e6f1fc;border-right:1px solid #86a6c6"></div>
<div style="left:8px;top:470px;font-family:'Liberation Sans', sans-serif;font-size:11px;line-height:13.200px;font-weight:bold;color:#000;letter-spacing:0.2px">Navegador</div>
<svg style="left:72px;top:471px;" width="10" height="10" viewBox="0 0 10 10"><path d="M1 1 L9 9 M9 1 L1 9" stroke="#333" stroke-width="1.05"/></svg>
<div style="left:167px;top:475px;width:10px;height:2px;background:#333"></div>
<div style="left:4px;top:485px;width:179px;height:1px;background:#8c8c8c"></div>
<div style="left:4px;top:486px;width:179px;height:23px;background:#f0f0f0"></div>
<div style="left:5px;top:487px;width:98px;height:21px;background:#e5e5e5;border:1px solid #c8c8c8"></div>
<div style="left:8px;top:491px;font-family:'Liberation Sans', sans-serif;font-size:11px;line-height:13.200px;color:#000;letter-spacing:-0.3px">Membros</div>
<svg style="left:87px;top:493px;" width="11" height="8" viewBox="0 0 11 8"><path d="M1 1.5 L5.5 6 L10 1.5" fill="none" stroke="#333" stroke-width="1.1"/></svg>
<div style="left:106px;top:487px;width:49px;height:21px;background:#cfcfcf;border:1px solid #c8c8c8"></div>
<div style="left:109px;top:489px;width:26px;height:17px;background:#ececec"></div>
<div style="left:110px;top:491px;font-family:'Liberation Sans', sans-serif;font-size:11px;line-height:13.200px;color:#9a9a9a">&lt;...</div>
<svg style="left:139px;top:493px;" width="11" height="8" viewBox="0 0 11 8"><path d="M1 1.5 L5.5 6 L10 1.5" fill="none" stroke="#999" stroke-width="1.1"/></svg>
<svg style="left:158px;top:489px;" width="17" height="17" viewBox="0 0 17 17"><rect x="0.5" y="0.5" width="15" height="12" fill="#f0f6fc" stroke="#4a6a8a"/><rect x="1" y="1" width="14" height="2" fill="#9ab8d8"/><path d="M3.5 5.5 H7.5 C8 5.5 8 6 8 6.5 C8 6 8 5.5 8.5 5.5 H13.5 V15.5 H8.5 C8 15.5 8 16 8 16 C8 16 8 15.5 7.5 15.5 H3.5 Z" fill="#dcebf7" stroke="#4a6a8a"/><path d="M8 6.5 V15.5" stroke="#4a6a8a"/></svg>
<div style="left:4px;top:509px;width:163px;height:277px;background:#fff"></div>
<div style="left:12px;top:509px;width:1px;height:277px;background:repeating-linear-gradient(to bottom,#a0a0a0 0 1px,transparent 1px 2px)"></div>
<div style="left:13px;top:518px;width:10px;height:1px;background:repeating-linear-gradient(to right,#a0a0a0 0 1px,transparent 1px 2px)"></div>
<svg style="left:23px;top:509px;" width="18" height="17" viewBox="0 0 18 17"><circle cx="11.2" cy="11.3" r="5.2" fill="#f4a8a8" stroke="#c86060"/><path d="M3.6 6 V4.2 C3.6 1.3 8.4 1.3 8.4 4.2 V6" fill="none" stroke="#7a7a7a" stroke-width="1.3"/><rect x="1.5" y="5.5" width="9" height="6.5" rx="1.5" fill="#f4b860" stroke="#9a6020"/><path d="M4 7.6 H8 M6 7.6 V10.6" stroke="#9a6020" stroke-width="1"/></svg>
<div style="left:47px;top:512px;font-family:'Liberation Sans', sans-serif;font-size:11px;line-height:13.200px;color:#000;letter-spacing:0px">jButton2ActionPerformec</div>
<div style="left:13px;top:536px;width:10px;height:1px;background:repeating-linear-gradient(to right,#a0a0a0 0 1px,transparent 1px 2px)"></div>
<svg style="left:23px;top:527px;" width="18" height="17" viewBox="0 0 18 17"><circle cx="11.2" cy="11.3" r="5.2" fill="#f4a8a8" stroke="#c86060"/><path d="M3.6 6 V4.2 C3.6 1.3 8.4 1.3 8.4 4.2 V6" fill="none" stroke="#7a7a7a" stroke-width="1.3"/><rect x="1.5" y="5.5" width="9" height="6.5" rx="1.5" fill="#f4b860" stroke="#9a6020"/><path d="M4 7.6 H8 M6 7.6 V10.6" stroke="#9a6020" stroke-width="1"/></svg>
<div style="left:47px;top:530px;font-family:'Liberation Sans', sans-serif;font-size:11px;line-height:13.200px;color:#000;letter-spacing:0px">jButton3ActionPerformec</div>
<div style="left:13px;top:554px;width:10px;height:1px;background:repeating-linear-gradient(to right,#a0a0a0 0 1px,transparent 1px 2px)"></div>
<svg style="left:23px;top:545px;" width="18" height="17" viewBox="0 0 18 17"><circle cx="11.2" cy="11.3" r="5.2" fill="#f4a8a8" stroke="#c86060"/><path d="M3.6 6 V4.2 C3.6 1.3 8.4 1.3 8.4 4.2 V6" fill="none" stroke="#7a7a7a" stroke-width="1.3"/><rect x="1.5" y="5.5" width="9" height="6.5" rx="1.5" fill="#f4b860" stroke="#9a6020"/><path d="M4 7.6 H8 M6 7.6 V10.6" stroke="#9a6020" stroke-width="1"/></svg>
<div style="left:47px;top:548px;font-family:'Liberation Sans', sans-serif;font-size:11px;line-height:13.200px;color:#000;letter-spacing:0px">jButton4ActionPerformec</div>
<div style="left:13px;top:572px;width:10px;height:1px;background:repeating-linear-gradient(to right,#a0a0a0 0 1px,transparent 1px 2px)"></div>
<svg style="left:23px;top:563px;" width="18" height="17" viewBox="0 0 18 17"><circle cx="11.2" cy="11.3" r="5.2" fill="#f4a8a8" stroke="#c86060"/><path d="M3.6 6 V4.2 C3.6 1.3 8.4 1.3 8.4 4.2 V6" fill="none" stroke="#7a7a7a" stroke-width="1.3"/><rect x="1.5" y="5.5" width="9" height="6.5" rx="1.5" fill="#f4b860" stroke="#9a6020"/><path d="M4 7.6 H8 M6 7.6 V10.6" stroke="#9a6020" stroke-width="1"/></svg>
<div style="left:47px;top:566px;font-family:'Liberation Sans', sans-serif;font-size:11px;line-height:13.200px;color:#000;letter-spacing:0px">jButton5ActionPerformec</div>
<div style="left:13px;top:590px;width:10px;height:1px;background:repeating-linear-gradient(to right,#a0a0a0 0 1px,transparent 1px 2px)"></div>
<svg style="left:23px;top:581px;" width="18" height="17" viewBox="0 0 18 17"><circle cx="11.2" cy="11.3" r="5.2" fill="#f4a8a8" stroke="#c86060"/><path d="M3.6 6 V4.2 C3.6 1.3 8.4 1.3 8.4 4.2 V6" fill="none" stroke="#7a7a7a" stroke-width="1.3"/><rect x="1.5" y="5.5" width="9" height="6.5" rx="1.5" fill="#f4b860" stroke="#9a6020"/><path d="M4 7.6 H8 M6 7.6 V10.6" stroke="#9a6020" stroke-width="1"/></svg>
<div style="left:47px;top:584px;font-family:'Liberation Sans', sans-serif;font-size:11px;line-height:13.200px;color:#000;letter-spacing:0px">jButton6ActionPerformec</div>
<div style="left:13px;top:608px;width:10px;height:1px;background:repeating-linear-gradient(to right,#a0a0a0 0 1px,transparent 1px 2px)"></div>
<svg style="left:28px;top:601px;" width="13" height="14" viewBox="0 0 13 14"><ellipse cx="6.5" cy="7" rx="5" ry="5.8" fill="#f4a8a8" stroke="#c86060"/><path d="M5.5 1.5 V12.5 M7.5 1.5 V12.5" stroke="#c86060" stroke-width="0.9"/></svg>
<div style="left:47px;top:602px;font-family:'Liberation Sans', sans-serif;font-size:11px;line-height:13.200px;color:#000;letter-spacing:0px">main(<span style='color:#888'>String[]</span> args)</div>
<div style="left:13px;top:626px;width:10px;height:1px;background:repeating-linear-gradient(to right,#a0a0a0 0 1px,transparent 1px 2px)"></div>
<svg style="left:23px;top:617px;" width="17" height="17" viewBox="0 0 17 17"><rect x="5.5" y="6.5" width="10" height="9.5" fill="#c0dcf4" stroke="#3a6a9a"/><rect x="1.5" y="0.5" width="9" height="9" fill="#f3d27a" stroke="#9a7a20"/><path d="M1.5 5 H10.5 M6 0.5 V9.5" stroke="#9a7a20" stroke-width="0.9"/></svg>
<div style="left:47px;top:620px;font-family:'Liberation Sans', sans-serif;font-size:11px;line-height:13.200px;color:#000;letter-spacing:0px">estado : <span style='color:#888'>boolean</span></div>
<div style="left:13px;top:644px;width:10px;height:1px;background:repeating-linear-gradient(to right,#a0a0a0 0 1px,transparent 1px 2px)"></div>
<svg style="left:23px;top:635px;" width="17" height="17" viewBox="0 0 17 17"><rect x="5.5" y="6.5" width="10" height="9.5" fill="#c0dcf4" stroke="#3a6a9a"/><path d="M3.6 6 V4.2 C3.6 1.3 8.4 1.3 8.4 4.2 V6" fill="none" stroke="#7a7a7a" stroke-width="1.3"/><rect x="1.5" y="5.5" width="9" height="6.5" rx="1.5" fill="#f4b860" stroke="#9a6020"/><path d="M4 7.6 H8 M6 7.6 V10.6" stroke="#9a6020" stroke-width="1"/></svg>
<div style="left:47px;top:638px;font-family:'Liberation Sans', sans-serif;font-size:11px;line-height:13.200px;color:#000;letter-spacing:0px">jButton1 : <span style='color:#888'>JButton</span></div>
<div style="left:13px;top:662px;width:10px;height:1px;background:repeating-linear-gradient(to right,#a0a0a0 0 1px,transparent 1px 2px)"></div>
<svg style="left:23px;top:653px;" width="17" height="17" viewBox="0 0 17 17"><rect x="5.5" y="6.5" width="10" height="9.5" fill="#c0dcf4" stroke="#3a6a9a"/><path d="M3.6 6 V4.2 C3.6 1.3 8.4 1.3 8.4 4.2 V6" fill="none" stroke="#7a7a7a" stroke-width="1.3"/><rect x="1.5" y="5.5" width="9" height="6.5" rx="1.5" fill="#f4b860" stroke="#9a6020"/><path d="M4 7.6 H8 M6 7.6 V10.6" stroke="#9a6020" stroke-width="1"/></svg>
<div style="left:47px;top:656px;font-family:'Liberation Sans', sans-serif;font-size:11px;line-height:13.200px;color:#000;letter-spacing:0px">jButton2 : <span style='color:#888'>JButton</span></div>
<div style="left:13px;top:680px;width:10px;height:1px;background:repeating-linear-gradient(to right,#a0a0a0 0 1px,transparent 1px 2px)"></div>
<svg style="left:23px;top:671px;" width="17" height="17" viewBox="0 0 17 17"><rect x="5.5" y="6.5" width="10" height="9.5" fill="#c0dcf4" stroke="#3a6a9a"/><path d="M3.6 6 V4.2 C3.6 1.3 8.4 1.3 8.4 4.2 V6" fill="none" stroke="#7a7a7a" stroke-width="1.3"/><rect x="1.5" y="5.5" width="9" height="6.5" rx="1.5" fill="#f4b860" stroke="#9a6020"/><path d="M4 7.6 H8 M6 7.6 V10.6" stroke="#9a6020" stroke-width="1"/></svg>
<div style="left:47px;top:674px;font-family:'Liberation Sans', sans-serif;font-size:11px;line-height:13.200px;color:#000;letter-spacing:0px">jButton3 : <span style='color:#888'>JButton</span></div>
<div style="left:13px;top:698px;width:10px;height:1px;background:repeating-linear-gradient(to right,#a0a0a0 0 1px,transparent 1px 2px)"></div>
<svg style="left:23px;top:689px;" width="17" height="17" viewBox="0 0 17 17"><rect x="5.5" y="6.5" width="10" height="9.5" fill="#c0dcf4" stroke="#3a6a9a"/><path d="M3.6 6 V4.2 C3.6 1.3 8.4 1.3 8.4 4.2 V6" fill="none" stroke="#7a7a7a" stroke-width="1.3"/><rect x="1.5" y="5.5" width="9" height="6.5" rx="1.5" fill="#f4b860" stroke="#9a6020"/><path d="M4 7.6 H8 M6 7.6 V10.6" stroke="#9a6020" stroke-width="1"/></svg>
<div style="left:47px;top:692px;font-family:'Liberation Sans', sans-serif;font-size:11px;line-height:13.200px;color:#000;letter-spacing:0px">jButton4 : <span style='color:#888'>JButton</span></div>
<div style="left:13px;top:716px;width:10px;height:1px;background:repeating-linear-gradient(to right,#a0a0a0 0 1px,transparent 1px 2px)"></div>
<svg style="left:23px;top:707px;" width="17" height="17" viewBox="0 0 17 17"><rect x="5.5" y="6.5" width="10" height="9.5" fill="#c0dcf4" stroke="#3a6a9a"/><path d="M3.6 6 V4.2 C3.6 1.3 8.4 1.3 8.4 4.2 V6" fill="none" stroke="#7a7a7a" stroke-width="1.3"/><rect x="1.5" y="5.5" width="9" height="6.5" rx="1.5" fill="#f4b860" stroke="#9a6020"/><path d="M4 7.6 H8 M6 7.6 V10.6" stroke="#9a6020" stroke-width="1"/></svg>
<div style="left:47px;top:710px;font-family:'Liberation Sans', sans-serif;font-size:11px;line-height:13.200px;color:#000;letter-spacing:0px">jButton5 : <span style='color:#888'>JButton</span></div>
<div style="left:13px;top:734px;width:10px;height:1px;background:repeating-linear-gradient(to right,#a0a0a0 0 1px,transparent 1px 2px)"></div>
<svg style="left:23px;top:725px;" width="17" height="17" viewBox="0 0 17 17"><rect x="5.5" y="6.5" width="10" height="9.5" fill="#c0dcf4" stroke="#3a6a9a"/><path d="M3.6 6 V4.2 C3.6 1.3 8.4 1.3 8.4 4.2 V6" fill="none" stroke="#7a7a7a" stroke-width="1.3"/><rect x="1.5" y="5.5" width="9" height="6.5" rx="1.5" fill="#f4b860" stroke="#9a6020"/><path d="M4 7.6 H8 M6 7.6 V10.6" stroke="#9a6020" stroke-width="1"/></svg>
<div style="left:47px;top:728px;font-family:'Liberation Sans', sans-serif;font-size:11px;line-height:13.200px;color:#000;letter-spacing:0px">jButton6 : <span style='color:#888'>JButton</span></div>
<div style="left:13px;top:752px;width:10px;height:1px;background:repeating-linear-gradient(to right,#a0a0a0 0 1px,transparent 1px 2px)"></div>
<svg style="left:23px;top:743px;" width="17" height="17" viewBox="0 0 17 17"><rect x="5.5" y="6.5" width="10" height="9.5" fill="#c0dcf4" stroke="#3a6a9a"/><path d="M3.6 6 V4.2 C3.6 1.3 8.4 1.3 8.4 4.2 V6" fill="none" stroke="#7a7a7a" stroke-width="1.3"/><rect x="1.5" y="5.5" width="9" height="6.5" rx="1.5" fill="#f4b860" stroke="#9a6020"/><path d="M4 7.6 H8 M6 7.6 V10.6" stroke="#9a6020" stroke-width="1"/></svg>
<div style="left:47px;top:746px;font-family:'Liberation Sans', sans-serif;font-size:11px;line-height:13.200px;color:#000;letter-spacing:0px">jLabel1 : <span style='color:#888'>JLabel</span></div>
<div style="left:13px;top:770px;width:10px;height:1px;background:repeating-linear-gradient(to right,#a0a0a0 0 1px,transparent 1px 2px)"></div>
<svg style="left:23px;top:761px;" width="17" height="17" viewBox="0 0 17 17"><rect x="5.5" y="6.5" width="10" height="9.5" fill="#c0dcf4" stroke="#3a6a9a"/><path d="M3.6 6 V4.2 C3.6 1.3 8.4 1.3 8.4 4.2 V6" fill="none" stroke="#7a7a7a" stroke-width="1.3"/><rect x="1.5" y="5.5" width="9" height="6.5" rx="1.5" fill="#f4b860" stroke="#9a6020"/><path d="M4 7.6 H8 M6 7.6 V10.6" stroke="#9a6020" stroke-width="1"/></svg>
<div style="left:47px;top:764px;font-family:'Liberation Sans', sans-serif;font-size:11px;line-height:13.200px;color:#000;letter-spacing:0px">jLabel2 : <span style='color:#888'>JLabel</span></div>
<div style="left:13px;top:788px;width:10px;height:1px;background:repeating-linear-gradient(to right,#a0a0a0 0 1px,transparent 1px 2px)"></div>
<svg style="left:23px;top:779px;" width="17" height="17" viewBox="0 0 17 17"><rect x="5.5" y="6.5" width="10" height="9.5" fill="#c0dcf4" stroke="#3a6a9a"/><path d="M3.6 6 V4.2 C3.6 1.3 8.4 1.3 8.4 4.2 V6" fill="none" stroke="#7a7a7a" stroke-width="1.3"/><rect x="1.5" y="5.5" width="9" height="6.5" rx="1.5" fill="#f4b860" stroke="#9a6020"/><path d="M4 7.6 H8 M6 7.6 V10.6" stroke="#9a6020" stroke-width="1"/></svg>
<div style="left:47px;top:782px;font-family:'Liberation Sans', sans-serif;font-size:11px;line-height:13.200px;color:#000;letter-spacing:0px">jLabel3 : <span style='color:#888'>JLabel</span></div>
<div style="left:4px;top:786px;width:179px;height:17px;background:#f0f0f0"></div>
<div style="left:167px;top:509px;width:16px;height:277px;background:#f0f0f0"></div>
<svg style="left:170px;top:514px;" width="10" height="8" viewBox="0 0 10 8"><path d="M1 6 L5 2 L9 6" fill="none" stroke="#555" stroke-width="1.5"/></svg>
<svg style="left:170px;top:772px;" width="10" height="8" viewBox="0 0 10 8"><path d="M1 2 L5 6 L9 2" fill="none" stroke="#555" stroke-width="1.5"/></svg>
<div style="left:168px;top:563px;width:14px;height:144px;background:#cdcdcd"></div>
<svg style="left:9px;top:789px;" width="8" height="10" viewBox="0 0 8 10"><path d="M6 1 L2 5 L6 9" fill="none" stroke="#555" stroke-width="1.5"/></svg>
<svg style="left:154px;top:789px;" width="8" height="10" viewBox="0 0 8 10"><path d="M2 1 L6 5 L2 9" fill="none" stroke="#555" stroke-width="1.5"/></svg>
<div style="left:30px;top:787px;width:76px;height:14px;background:#cdcdcd"></div>
<div style="left:4px;top:802px;width:179px;height:1px;background:#a8a8a8"></div>
<div style="left:4px;top:803px;width:179px;height:32px;background:#f0f0f0"></div>
<svg style="left:89px;top:804px;" width="10" height="5" viewBox="0 0 10 5"><path d="M0 0 H10 L5 5 Z" fill="#888"/></svg>
<div style="left:37px;top:810px;width:25px;height:19px;background:#c7def3;border:1px solid #a8c8e8"></div>
<div style="left:65px;top:810px;width:25px;height:19px;background:#c7def3;border:1px solid #a8c8e8"></div>
<div style="left:93px;top:810px;width:25px;height:19px;background:#c7def3;border:1px solid #a8c8e8"></div>
<div style="left:121px;top:810px;width:25px;height:19px;background:#c7def3;border:1px solid #a8c8e8"></div>
<svg style="left:12px;top:811px;" width="19" height="17" viewBox="0 0 19 17"><circle cx="6" cy="3.5" r="2.4" fill="#f6c8a0" stroke="#a86040" stroke-width="0.9"/><rect x="2.5" y="6.5" width="7" height="5.5" rx="1.5" fill="#f4a0a0" stroke="#b05050" stroke-width="0.9"/><rect x="3.5" y="11.5" width="5" height="4" fill="#9ac4ec" stroke="#3a5a8a" stroke-width="0.9"/><circle cx="12.5" cy="5.5" r="2.2" fill="#f6c8a0" stroke="#a86040" stroke-width="0.9"/><rect x="9" y="8.5" width="7.5" height="4.5" rx="1.5" fill="#f4a0a0" stroke="#b05050" stroke-width="0.9"/><rect x="10" y="12.5" width="5.5" height="3" fill="#9ac4ec" stroke="#3a5a8a" stroke-width="0.9"/></svg>
<svg style="left:43px;top:813px;" width="13" height="13" viewBox="0 0 13 13"><rect x="1.5" y="1.5" width="10" height="10" fill="#b8d8f0" stroke="#2a4a6a" stroke-width="1.2"/></svg>
<svg style="left:74px;top:813px;" width="6" height="14" viewBox="0 0 6 14"><rect x="1" y="1" width="4" height="12" fill="#d8e8f5" stroke="#2a4a6a"/></svg>
<svg style="left:97px;top:811px;" width="17" height="17" viewBox="0 0 17 17"><path d="M4.5 8 V5.5 C4.5 1.2 12.5 1.2 12.5 5.5 V8" fill="none" stroke="#606060" stroke-width="1.8"/><rect x="1.5" y="7.5" width="14" height="8.5" rx="1" fill="#f0c870" stroke="#8a6020"/><path d="M2 10 H15 M2 12 H15 M2 14 H15" stroke="#c09038" stroke-width="0.8"/></svg>
<svg style="left:125px;top:811px;" width="17" height="17" viewBox="0 0 17 17"><path d="M7 1 L13 5 L9 11 L3 7 Z" fill="#f0c070" stroke="#a07030"/><rect x="1.5" y="8.5" width="8" height="6" fill="#b8d8f0" stroke="#2a4a6a"/><circle cx="12" cy="12" r="3.5" fill="#f2a0a0" stroke="#c05050"/></svg>
<div style="left:148px;top:812px;width:1px;height:16px;background:#888"></div>
<svg style="left:157px;top:811px;" width="17" height="17" viewBox="0 0 17 17"><rect x="1.5" y="4.5" width="9" height="10" fill="#f3d27a" stroke="#907020"/><path d="M9 1 L14 5 L10 10 L5 6 Z" fill="#f0c070" stroke="#a07030"/><rect x="4" y="8" width="5" height="5" fill="#b8d8f0" stroke="#2a4a6a" stroke-width="0.8"/><circle cx="13" cy="11" r="3" fill="#f2a0a0" stroke="#c05050"/></svg>
<div style="left:178px;top:812px;width:1px;height:16px;background:#888"></div>
<div style="left:189px;top:87px;width:1333px;height:1px;background:#9c9c9c"></div>
<div style="left:189px;top:106px;width:1408px;height:1px;background:#8e8e8e"></div>
<div style="left:189px;top:88px;width:39px;height:18px;background:linear-gradient(#f7f7f7,#e6e6e6);box-shadow:inset 1px 0 0 #fdfdfd;border-left:1px solid #9a9a9a;"></div>
<div style="left:196px;top:91px;font-family:'Liberation Sans', sans-serif;font-size:11px;line-height:13.200px;color:#000;letter-spacing:0.4px">...java</div>
<div style="left:228px;top:88px;width:108px;height:20px;background:linear-gradient(#ffffff,#fbfbfb 80%,#f2f2f2)"></div>
<svg style="left:233px;top:89px;" width="17" height="17" viewBox="0 0 17 17"><path d="M0.5 0.5 H9 L12.5 4 V14.5 H0.5 Z" fill="#eef4fa" stroke="#55606c"/><rect x="1" y="1" width="8" height="3.5" fill="#c4d8ec"/><path d="M9 0.5 V4 H12.5" fill="#f4f8fc" stroke="#55606c" stroke-width="0.8"/><rect x="2.5" y="5.5" width="7.5" height="7.5" fill="#fafcfe" stroke="#4a5a6a"/><path d="M3.5 8.5 H8.5 M3.5 10.5 H8.5" stroke="#8a8a8a" stroke-width="0.9"/><path d="M9.5 6.5 L15.5 10.7 L9.5 15 Z" fill="#c4f0a4" stroke="#3a7a1a" stroke-width="1.1" stroke-linejoin="round"/><circle cx="3.6" cy="12.4" r="3.4" fill="#e01818" stroke="#8a0000" stroke-width="0.7"/><path d="M2.6 10.8 V12.6 M4.6 10.8 V12.6" stroke="#fff" stroke-width="0.9"/></svg>
<div style="left:251px;top:91px;font-family:'Liberation Sans', sans-serif;font-size:11px;line-height:13.200px;color:#000;font-weight:bold;letter-spacing:0.6px">Tela1.java</div>
<svg style="left:323px;top:92px;" width="10" height="10" viewBox="0 0 10 10"><path d="M1 1 L9 9 M9 1 L1 9" stroke="#333" stroke-width="1.05"/></svg>
<div style="left:336px;top:88px;width:100px;height:18px;background:linear-gradient(#f7f7f7,#e6e6e6);box-shadow:inset 1px 0 0 #fdfdfd;border-left:1px solid #9a9a9a;"></div>
<svg style="left:341px;top:89px;" width="17" height="17" viewBox="0 0 17 17"><path d="M0.5 0.5 H9 L12.5 4 V14.5 H0.5 Z" fill="#eef4fa" stroke="#55606c"/><rect x="1" y="1" width="8" height="3.5" fill="#c4d8ec"/><path d="M9 0.5 V4 H12.5" fill="#f4f8fc" stroke="#55606c" stroke-width="0.8"/><rect x="2.5" y="5.5" width="7.5" height="7.5" fill="#fafcfe" stroke="#4a5a6a"/><path d="M3.5 8.5 H8.5 M3.5 10.5 H8.5" stroke="#8a8a8a" stroke-width="0.9"/><path d="M9.5 6.5 L15.5 10.7 L9.5 15 Z" fill="#c4f0a4" stroke="#3a7a1a" stroke-width="1.1" stroke-linejoin="round"/></svg>
<div style="left:359px;top:91px;font-family:'Liberation Sans', sans-serif;font-size:11px;line-height:13.200px;color:#000;letter-spacing:0.05px">Tela2.java</div>
<svg style="left:423px;top:92px;" width="10" height="10" viewBox="0 0 10 10"><path d="M1 1 L9 9 M9 1 L1 9" stroke="#333" stroke-width="1.05"/></svg>
<div style="left:436px;top:88px;width:100px;height:18px;background:linear-gradient(#f7f7f7,#e6e6e6);box-shadow:inset 1px 0 0 #fdfdfd;border-left:1px solid #9a9a9a;"></div>
<svg style="left:441px;top:89px;" width="17" height="17" viewBox="0 0 17 17"><path d="M0.5 0.5 H9 L12.5 4 V14.5 H0.5 Z" fill="#eef4fa" stroke="#55606c"/><rect x="1" y="1" width="8" height="3.5" fill="#c4d8ec"/><path d="M9 0.5 V4 H12.5" fill="#f4f8fc" stroke="#55606c" stroke-width="0.8"/><rect x="2.5" y="5.5" width="7.5" height="7.5" fill="#fafcfe" stroke="#4a5a6a"/><path d="M3.5 8.5 H8.5 M3.5 10.5 H8.5" stroke="#8a8a8a" stroke-width="0.9"/><path d="M9.5 6.5 L15.5 10.7 L9.5 15 Z" fill="#c4f0a4" stroke="#3a7a1a" stroke-width="1.1" stroke-linejoin="round"/></svg>
<div style="left:459px;top:91px;font-family:'Liberation Sans', sans-serif;font-size:11px;line-height:13.200px;color:#000;letter-spacing:0.05px">Tela3.java</div>
<svg style="left:523px;top:92px;" width="10" height="10" viewBox="0 0 10 10"><path d="M1 1 L9 9 M9 1 L1 9" stroke="#333" stroke-width="1.05"/></svg>
<div style="left:536px;top:88px;width:100px;height:18px;background:linear-gradient(#f7f7f7,#e6e6e6);box-shadow:inset 1px 0 0 #fdfdfd;border-left:1px solid #9a9a9a;"></div>
<svg style="left:541px;top:89px;" width="17" height="17" viewBox="0 0 17 17"><path d="M0.5 0.5 H9 L12.5 4 V14.5 H0.5 Z" fill="#eef4fa" stroke="#55606c"/><rect x="1" y="1" width="8" height="3.5" fill="#c4d8ec"/><path d="M9 0.5 V4 H12.5" fill="#f4f8fc" stroke="#55606c" stroke-width="0.8"/><rect x="2.5" y="5.5" width="7.5" height="7.5" fill="#fafcfe" stroke="#4a5a6a"/><path d="M3.5 8.5 H8.5 M3.5 10.5 H8.5" stroke="#8a8a8a" stroke-width="0.9"/><path d="M9.5 6.5 L15.5 10.7 L9.5 15 Z" fill="#c4f0a4" stroke="#3a7a1a" stroke-width="1.1" stroke-linejoin="round"/></svg>
<div style="left:559px;top:91px;font-family:'Liberation Sans', sans-serif;font-size:11px;line-height:13.200px;color:#000;letter-spacing:0.05px">Tela4.java</div>
<svg style="left:623px;top:92px;" width="10" height="10" viewBox="0 0 10 10"><path d="M1 1 L9 9 M9 1 L1 9" stroke="#333" stroke-width="1.05"/></svg>
<div style="left:636px;top:88px;width:100px;height:18px;background:linear-gradient(#f7f7f7,#e6e6e6);box-shadow:inset 1px 0 0 #fdfdfd;border-left:1px solid #9a9a9a;"></div>
<svg style="left:641px;top:89px;" width="17" height="17" viewBox="0 0 17 17"><path d="M0.5 0.5 H9 L12.5 4 V14.5 H0.5 Z" fill="#eef4fa" stroke="#55606c"/><rect x="1" y="1" width="8" height="3.5" fill="#c4d8ec"/><path d="M9 0.5 V4 H12.5" fill="#f4f8fc" stroke="#55606c" stroke-width="0.8"/><rect x="2.5" y="5.5" width="7.5" height="7.5" fill="#fafcfe" stroke="#4a5a6a"/><path d="M3.5 8.5 H8.5 M3.5 10.5 H8.5" stroke="#8a8a8a" stroke-width="0.9"/><path d="M9.5 6.5 L15.5 10.7 L9.5 15 Z" fill="#c4f0a4" stroke="#3a7a1a" stroke-width="1.1" stroke-linejoin="round"/></svg>
<div style="left:659px;top:91px;font-family:'Liberation Sans', sans-serif;font-size:11px;line-height:13.200px;color:#000;letter-spacing:0.05px">Tela5.java</div>
<svg style="left:723px;top:92px;" width="10" height="10" viewBox="0 0 10 10"><path d="M1 1 L9 9 M9 1 L1 9" stroke="#333" stroke-width="1.05"/></svg>
<div style="left:736px;top:88px;width:100px;height:18px;background:linear-gradient(#f7f7f7,#e6e6e6);box-shadow:inset 1px 0 0 #fdfdfd;border-left:1px solid #9a9a9a;"></div>
<svg style="left:741px;top:89px;" width="17" height="17" viewBox="0 0 17 17"><path d="M0.5 0.5 H9 L12.5 4 V14.5 H0.5 Z" fill="#eef4fa" stroke="#55606c"/><rect x="1" y="1" width="8" height="3.5" fill="#c4d8ec"/><path d="M9 0.5 V4 H12.5" fill="#f4f8fc" stroke="#55606c" stroke-width="0.8"/><rect x="2.5" y="5.5" width="7.5" height="7.5" fill="#fafcfe" stroke="#4a5a6a"/><path d="M3.5 8.5 H8.5 M3.5 10.5 H8.5" stroke="#8a8a8a" stroke-width="0.9"/><path d="M9.5 6.5 L15.5 10.7 L9.5 15 Z" fill="#c4f0a4" stroke="#3a7a1a" stroke-width="1.1" stroke-linejoin="round"/></svg>
<div style="left:759px;top:91px;font-family:'Liberation Sans', sans-serif;font-size:11px;line-height:13.200px;color:#000;letter-spacing:0.05px">Tela6.java</div>
<svg style="left:823px;top:92px;" width="10" height="10" viewBox="0 0 10 10"><path d="M1 1 L9 9 M9 1 L1 9" stroke="#333" stroke-width="1.05"/></svg>
<div style="left:836px;top:88px;width:100px;height:18px;background:linear-gradient(#f7f7f7,#e6e6e6);box-shadow:inset 1px 0 0 #fdfdfd;border-left:1px solid #9a9a9a;"></div>
<svg style="left:841px;top:89px;" width="17" height="17" viewBox="0 0 17 17"><path d="M0.5 0.5 H9 L12.5 4 V14.5 H0.5 Z" fill="#eef4fa" stroke="#55606c"/><rect x="1" y="1" width="8" height="3.5" fill="#c4d8ec"/><path d="M9 0.5 V4 H12.5" fill="#f4f8fc" stroke="#55606c" stroke-width="0.8"/><rect x="2.5" y="5.5" width="7.5" height="7.5" fill="#fafcfe" stroke="#4a5a6a"/><path d="M3.5 8.5 H8.5 M3.5 10.5 H8.5" stroke="#8a8a8a" stroke-width="0.9"/><path d="M9.5 6.5 L15.5 10.7 L9.5 15 Z" fill="#c4f0a4" stroke="#3a7a1a" stroke-width="1.1" stroke-linejoin="round"/></svg>
<div style="left:859px;top:91px;font-family:'Liberation Sans', sans-serif;font-size:11px;line-height:13.200px;color:#000;letter-spacing:0.05px">Tela7.java</div>
<svg style="left:923px;top:92px;" width="10" height="10" viewBox="0 0 10 10"><path d="M1 1 L9 9 M9 1 L1 9" stroke="#333" stroke-width="1.05"/></svg>
<div style="left:936px;top:88px;width:112px;height:18px;background:linear-gradient(#f7f7f7,#e6e6e6);box-shadow:inset 1px 0 0 #fdfdfd;border-left:1px solid #9a9a9a;"></div>
<svg style="left:941px;top:89px;" width="17" height="17" viewBox="0 0 17 17"><path d="M0.5 0.5 H9 L12.5 4 V14.5 H0.5 Z" fill="#eef4fa" stroke="#55606c"/><rect x="1" y="1" width="8" height="3.5" fill="#c4d8ec"/><path d="M9 0.5 V4 H12.5" fill="#f4f8fc" stroke="#55606c" stroke-width="0.8"/><rect x="2.5" y="5.5" width="7.5" height="7.5" fill="#fafcfe" stroke="#4a5a6a"/><path d="M3.5 8.5 H8.5 M3.5 10.5 H8.5" stroke="#8a8a8a" stroke-width="0.9"/><path d="M9.5 6.5 L15.5 10.7 L9.5 15 Z" fill="#c4f0a4" stroke="#3a7a1a" stroke-width="1.1" stroke-linejoin="round"/></svg>
<div style="left:959px;top:91px;font-family:'Liberation Sans', sans-serif;font-size:11px;line-height:13.200px;color:#000;letter-spacing:0.05px">TelaWin.java</div>
<svg style="left:1035px;top:92px;" width="10" height="10" viewBox="0 0 10 10"><path d="M1 1 L9 9 M9 1 L1 9" stroke="#333" stroke-width="1.05"/></svg>
<div style="left:1048px;top:88px;width:131px;height:18px;background:linear-gradient(#f7f7f7,#e6e6e6);box-shadow:inset 1px 0 0 #fdfdfd;border-left:1px solid #9a9a9a;"></div>
<svg style="left:1053px;top:89px;" width="17" height="17" viewBox="0 0 17 17"><path d="M0.5 0.5 H9 L12.5 4 V14.5 H0.5 Z" fill="#eef3f8" stroke="#5a6470"/><path d="M9 0.5 V4 H12.5" fill="#fafcfe" stroke="#5a6470" stroke-width="0.8"/><rect x="2.5" y="7.5" width="5" height="5" fill="#c8dcf0" stroke="#4a6a8a"/><path d="M6 3.5 L8.8 6.3 L6 9.1 L3.2 6.3 Z" fill="#e8c050" stroke="#9a7a20" stroke-width="0.8"/><circle cx="8.6" cy="10.3" r="2.6" fill="#f4b0b0" stroke="#c07070" stroke-width="0.8"/></svg>
<div style="left:1071px;top:91px;font-family:'Liberation Sans', sans-serif;font-size:11px;line-height:13.200px;color:#000;letter-spacing:0.05px">Cronometro.java</div>
<svg style="left:1166px;top:92px;" width="10" height="10" viewBox="0 0 10 10"><path d="M1 1 L9 9 M9 1 L1 9" stroke="#333" stroke-width="1.05"/></svg>
<div style="left:1179px;top:88px;width:124px;height:18px;background:linear-gradient(#f7f7f7,#e6e6e6);box-shadow:inset 1px 0 0 #fdfdfd;border-left:1px solid #9a9a9a;"></div>
<svg style="left:1184px;top:89px;" width="17" height="17" viewBox="0 0 17 17"><path d="M0.5 0.5 H9 L12.5 4 V14.5 H0.5 Z" fill="#eef4fa" stroke="#55606c"/><rect x="1" y="1" width="8" height="3.5" fill="#c4d8ec"/><path d="M9 0.5 V4 H12.5" fill="#f4f8fc" stroke="#55606c" stroke-width="0.8"/><rect x="2.5" y="5.5" width="7.5" height="7.5" fill="#fafcfe" stroke="#4a5a6a"/><path d="M3.5 8.5 H8.5 M3.5 10.5 H8.5" stroke="#8a8a8a" stroke-width="0.9"/><path d="M9.5 6.5 L15.5 10.7 L9.5 15 Z" fill="#c4f0a4" stroke="#3a7a1a" stroke-width="1.1" stroke-linejoin="round"/></svg>
<div style="left:1202px;top:91px;font-family:'Liberation Sans', sans-serif;font-size:11px;line-height:13.200px;color:#000;letter-spacing:0.05px">Formulario.java</div>
<svg style="left:1290px;top:92px;" width="10" height="10" viewBox="0 0 10 10"><path d="M1 1 L9 9 M9 1 L1 9" stroke="#333" stroke-width="1.05"/></svg>
<div style="left:1303px;top:88px;width:99px;height:18px;background:linear-gradient(#f7f7f7,#e6e6e6);box-shadow:inset 1px 0 0 #fdfdfd;border-left:1px solid #9a9a9a;"></div>
<svg style="left:1308px;top:89px;" width="17" height="17" viewBox="0 0 17 17"><path d="M0.5 0.5 H9 L12.5 4 V14.5 H0.5 Z" fill="#eef3f8" stroke="#5a6470"/><path d="M9 0.5 V4 H12.5" fill="#fafcfe" stroke="#5a6470" stroke-width="0.8"/><rect x="2.5" y="7.5" width="5" height="5" fill="#c8dcf0" stroke="#4a6a8a"/><path d="M6 3.5 L8.8 6.3 L6 9.1 L3.2 6.3 Z" fill="#e8c050" stroke="#9a7a20" stroke-width="0.8"/><circle cx="8.6" cy="10.3" r="2.6" fill="#f4b0b0" stroke="#c07070" stroke-width="0.8"/></svg>
<div style="left:1326px;top:91px;font-family:'Liberation Sans', sans-serif;font-size:11px;line-height:13.200px;color:#000;letter-spacing:0.05px">Class.java</div>
<svg style="left:1389px;top:92px;" width="10" height="10" viewBox="0 0 10 10"><path d="M1 1 L9 9 M9 1 L1 9" stroke="#333" stroke-width="1.05"/></svg>
<div style="left:1402px;top:88px;width:120px;height:18px;background:linear-gradient(#f7f7f7,#e6e6e6);box-shadow:inset 1px 0 0 #fdfdfd;border-left:1px solid #9a9a9a;"></div>
<svg style="left:1407px;top:89px;" width="17" height="17" viewBox="0 0 17 17"><path d="M0.5 0.5 H9 L12.5 4 V14.5 H0.5 Z" fill="#eef4fa" stroke="#55606c"/><rect x="1" y="1" width="8" height="3.5" fill="#c4d8ec"/><path d="M9 0.5 V4 H12.5" fill="#f4f8fc" stroke="#55606c" stroke-width="0.8"/><rect x="2.5" y="5.5" width="7.5" height="7.5" fill="#fafcfe" stroke="#4a5a6a"/><path d="M3.5 8.5 H8.5 M3.5 10.5 H8.5" stroke="#8a8a8a" stroke-width="0.9"/><path d="M9.5 6.5 L15.5 10.7 L9.5 15 Z" fill="#c4f0a4" stroke="#3a7a1a" stroke-width="1.1" stroke-linejoin="round"/></svg>
<div style="left:1425px;top:91px;font-family:'Liberation Sans', sans-serif;font-size:11px;line-height:13.200px;color:#000;letter-spacing:0.05px">TelaLose.java...</div>
<div style="left:229px;top:106px;width:107px;height:1px;background:#f4f4f4"></div>
<div style="left:228px;top:88px;width:1px;height:18px;background:#a4a4a4"></div>
<svg style="left:1529px;top:89px;" width="60" height="14" viewBox="0 0 60 14"><path d="M8 2 L3 7 L8 12 Z" fill="#333"/><path d="M21 2 L26 7 L21 12 Z" fill="#333"/><path d="M36 4 L46 4 L41 9 Z" fill="#333"/></svg>
<svg style="left:1581px;top:88px;" width="14" height="14" viewBox="0 0 14 14"><rect x="1.5" y="2.5" width="11" height="9" fill="none" stroke="#333"/><rect x="1.5" y="2.5" width="11" height="2" fill="#333"/></svg>
<div style="left:188px;top:106px;width:1px;height:730px;background:#8e8e8e"></div>
<div style="left:1596px;top:106px;width:1px;height:730px;background:#8e8e8e"></div>
<div style="left:188px;top:835px;width:1409px;height:1px;background:#9a9a9a"></div>
<div style="left:189px;top:107px;width:1407px;height:25px;background:#efefef"></div>
<div style="left:189px;top:132px;width:1407px;height:1px;background:#dde9f5"></div>
<div style="left:189px;top:133px;width:1407px;height:1px;background:#8c9cac"></div>
<div style="left:189px;top:108px;width:82px;height:23px;background:#c5ddf4;border:1px solid #9ec3e6"></div>
<div style="left:196px;top:114px;font-family:'Liberation Sans', sans-serif;font-size:11px;line-height:13.200px;color:#000;letter-spacing:-0.15px">Código-Fonte</div>
<div style="left:292px;top:114px;font-family:'Liberation Sans', sans-serif;font-size:11px;line-height:13.200px;color:#000;letter-spacing:0.2px">Projeto</div>
<div style="left:370px;top:114px;font-family:'Liberation Sans', sans-serif;font-size:11px;line-height:13.200px;color:#000;letter-spacing:-0.1px">Histórico</div>
<div style="left:436px;top:112px;width:1px;height:17px;background:#b0b0b0"></div>
<div style="left:530px;top:112px;width:1px;height:17px;background:#b0b0b0"></div>
<div style="left:651px;top:112px;width:1px;height:17px;background:#b0b0b0"></div>
<div style="left:726px;top:112px;width:1px;height:17px;background:#b0b0b0"></div>
<div style="left:779px;top:112px;width:1px;height:17px;background:#b0b0b0"></div>
<div style="left:830px;top:112px;width:1px;height:17px;background:#b0b0b0"></div>
<svg style="left:441px;top:112px;" width="18" height="17" viewBox="0 0 18 17"><rect x="0.5" y="0.5" width="12" height="15" fill="#eef2f6" stroke="#5a6a7a"/><path d="M3 2 V14" stroke="#333"/><path d="M6 8 L11 3 V6 H17 V10 H11 V13 Z" fill="#f4b040" stroke="#a06010" stroke-width="0.8"/></svg>
<svg style="left:465px;top:112px;" width="18" height="17" viewBox="0 0 18 17"><rect x="0.5" y="0.5" width="12" height="15" fill="#eef2f6" stroke="#5a6a7a"/><path d="M3 4 H10 M3 7 H10" stroke="#8a9aaa"/><path d="M5 11 L10 6 V9 H17 V13 H10 V16 Z" fill="#f4b040" stroke="#a06010" stroke-width="0.8"/></svg>
<svg style="left:486px;top:119px;" width="6" height="4" viewBox="0 0 6 4"><path d="M0 0 H6 L3 4 Z" fill="#333"/></svg>
<svg style="left:497px;top:112px;" width="18" height="17" viewBox="0 0 18 17"><rect x="0.5" y="0.5" width="12" height="15" fill="#dcdcdc" stroke="#a8a8a8"/><path d="M8 11 L13 6 V9 H17 V13 H13 V16 Z" fill="#c8c8c8" stroke="#a0a0a0" stroke-width="0.8"/></svg>
<svg style="left:519px;top:119px;" width="6" height="4" viewBox="0 0 6 4"><path d="M0 0 H6 L3 4 Z" fill="#333"/></svg>
<svg style="left:536px;top:112px;" width="18" height="18" viewBox="0 0 18 18"><circle cx="7" cy="7" r="5.5" fill="#dbe8f4" stroke="#333" stroke-width="1.6"/><path d="M11 11 L16.5 16.5" stroke="#333" stroke-width="2.6"/><path d="M1 6 H5 V4 H9" stroke="#f4b040" stroke-width="1.5" fill="none"/></svg>
<svg style="left:560px;top:112px;" width="18" height="18" viewBox="0 0 18 18"><rect x="4.5" y="0.5" width="12" height="6" fill="#f4b040" stroke="#a06010"/><path d="M1 11 L6 6 V9 H15 V13 H6 V16 Z" fill="#60b8f0" stroke="#1a68a8"/></svg>
<svg style="left:583px;top:112px;" width="18" height="18" viewBox="0 0 18 18"><rect x="1.5" y="0.5" width="12" height="6" fill="#f4b040" stroke="#a06010"/><path d="M17 11 L12 6 V9 H3 V13 H12 V16 Z" fill="#60b8f0" stroke="#1a68a8"/></svg>
<svg style="left:606px;top:112px;" width="18" height="18" viewBox="0 0 18 18"><rect x="0.5" y="0.5" width="12" height="6" fill="#f4b040" stroke="#a06010"/><rect x="3.5" y="6.5" width="13" height="5" fill="#f8d8a0" stroke="#888"/><rect x="5.5" y="11.5" width="11" height="5" fill="#9aa4ae" stroke="#555"/></svg>
<svg style="left:628px;top:112px;" width="18" height="18" viewBox="0 0 18 18"><rect x="0.5" y="0.5" width="13" height="12" fill="none" stroke="#333" stroke-dasharray="2 1"/><path d="M11 9 L17 14 L13 14.5 L15 17.5 Z" fill="#333"/></svg>
<svg style="left:657px;top:112px;" width="18" height="18" viewBox="0 0 18 18"><path d="M1 9 L8 2 L8 6 L12 6 L12 12 L8 12 L8 16 Z" fill="#f4b040" stroke="#a06010" transform="rotate(90 8 9) translate(0 0)"/><path d="M10 2 H15 L17 5 L15 8 H10 Z" fill="#8ad0f0" stroke="#2a70a0"/></svg>
<svg style="left:680px;top:112px;" width="18" height="18" viewBox="0 0 18 18"><path d="M5 1 V9 H1 L7.5 16 L14 9 H10 V1 Z" fill="#f4b040" stroke="#a06010"/><path d="M9 10 H14 L17 13 L14 16 H9 Z" fill="#8ad0f0" stroke="#2a70a0"/></svg>
<svg style="left:703px;top:112px;" width="18" height="18" viewBox="0 0 18 18"><path d="M2 1 H9 L12 4.5 L9 8 H2 Z" fill="#8ad0f0" stroke="#2a70a0"/><path d="M6 9 H12 L15 12.5 L12 16 H6 Z" fill="#d8e4ec" stroke="#7a8a9a"/></svg>
<svg style="left:732px;top:112px;" width="18" height="18" viewBox="0 0 18 18"><path d="M1 6 L6 1 V4 H12 V8 H6 V11 Z" fill="#60b8f0" stroke="#1a68a8"/><path d="M14 1 V17 M2 13 H17 M2 16 H17 M10 10 H17" stroke="#333" stroke-width="1.2"/></svg>
<svg style="left:755px;top:112px;" width="18" height="18" viewBox="0 0 18 18"><path d="M12 6 L7 1 V4 H1 V8 H7 V11 Z" fill="#60b8f0" stroke="#1a68a8"/><path d="M15 1 V17 M2 13 H17 M2 16 H17 M10 10 H14" stroke="#333" stroke-width="1.2"/></svg>
<svg style="left:785px;top:113px;" width="16" height="16" viewBox="0 0 16 16"><circle cx="8" cy="8" r="6.2" fill="#f47a7a" stroke="#d45858"/></svg>
<svg style="left:809px;top:114px;" width="14" height="14" viewBox="0 0 14 14"><rect x="0.5" y="0.5" width="12" height="12" fill="#c8c8c8" stroke="#888"/><rect x="2" y="2" width="9" height="4" fill="#ddd"/></svg>
<svg style="left:837px;top:113px;" width="16" height="16" viewBox="0 0 16 16"><path d="M1 10 L4 2 L7 8 L10 1" fill="none" stroke="#48b020" stroke-width="2"/><path d="M1 12 H15 M1 14.5 H15 M10 9.5 H15 M10 7 H15" stroke="#333" stroke-width="1.1"/></svg>
<svg style="left:860px;top:113px;" width="16" height="16" viewBox="0 0 16 16"><path d="M1 12 H15 M1 14.5 H15 M8 9.5 H15 M11 7 H15" stroke="#222" stroke-width="1.4"/></svg>
<svg style="left:1580px;top:114px;" width="12" height="12" viewBox="0 0 12 12"><rect x="1.5" y="1.5" width="9" height="9" fill="#fff" stroke="#777"/><path d="M6 2.5 L7 3.5 L6 4.5 L7 5.5 L6 6.5 L7 7.5 L6 8.5 L7 9.5" fill="none" stroke="#000" stroke-width="0.9"/><path d="M2.5 6 L3.5 7 L4.5 6 L5.5 7 L6.5 6 L7.5 7 L8.5 6 L9.5 7" fill="none" stroke="#000" stroke-width="0.9"/></svg>
<div style="left:189px;top:134px;width:34px;height:684px;background:#e9e8e2"></div>
<div style="left:223px;top:134px;width:1px;height:684px;background:#dcdbd5"></div>
<div style="left:224px;top:134px;width:29px;height:684px;background:#fff"></div>
<div style="left:253px;top:134px;width:1313px;height:684px;background:#fff"></div>
<div style="left:189px;top:818px;width:64px;height:17px;background:#e9e8e2"></div>
<div style="left:253px;top:134px;width:1313px;height:18px;background:#e0e0e0"></div>
<div style="left:253px;top:764px;width:1313px;height:18px;background:#e0e0e0"></div>
<div style="left:253px;top:800px;width:1313px;height:18px;background:#e0e0e0"></div>
<div style="left:253px;top:440px;width:1313px;height:18px;background:#e9eff8"></div>
<div style="left:253px;top:152px;width:1px;height:612px;background:repeating-linear-gradient(to bottom,#c4c4c4 0 1px,transparent 1px 2px)"></div>
<div style="left:253px;top:782px;width:1px;height:18px;background:repeating-linear-gradient(to bottom,#c4c4c4 0 1px,transparent 1px 2px)"></div>
<div style="left:285px;top:152px;width:1px;height:594px;background:repeating-linear-gradient(to bottom,#c4c4c4 0 1px,transparent 1px 2px)"></div>
<div style="left:317px;top:188px;width:1px;height:522px;background:repeating-linear-gradient(to bottom,#c4c4c4 0 1px,transparent 1px 2px)"></div>
<div style="left:349px;top:206px;width:1px;height:468px;background:repeating-linear-gradient(to bottom,#c4c4c4 0 1px,transparent 1px 2px)"></div>
<div style="left:381px;top:224px;width:1px;height:432px;background:repeating-linear-gradient(to bottom,#c4c4c4 0 1px,transparent 1px 2px)"></div>
<div style="left:413px;top:242px;width:1px;height:360px;background:repeating-linear-gradient(to bottom,#c4c4c4 0 1px,transparent 1px 2px)"></div>
<div style="left:413px;top:620px;width:1px;height:18px;background:repeating-linear-gradient(to bottom,#c4c4c4 0 1px,transparent 1px 2px)"></div>
<div style="left:445px;top:260px;width:1px;height:288px;background:repeating-linear-gradient(to bottom,#c4c4c4 0 1px,transparent 1px 2px)"></div>
<div style="left:445px;top:566px;width:1px;height:18px;background:repeating-linear-gradient(to bottom,#c4c4c4 0 1px,transparent 1px 2px)"></div>
<div style="left:477px;top:296px;width:1px;height:36px;background:repeating-linear-gradient(to bottom,#c4c4c4 0 1px,transparent 1px 2px)"></div>
<div style="left:477px;top:404px;width:1px;height:126px;background:repeating-linear-gradient(to bottom,#c4c4c4 0 1px,transparent 1px 2px)"></div>
<div style="left:509px;top:422px;width:1px;height:90px;background:repeating-linear-gradient(to bottom,#c4c4c4 0 1px,transparent 1px 2px)"></div>
<div style="left:381px;top:206px;width:24px;height:18px;background:#ede9a6"></div>
<div style="left:381px;top:656px;width:9px;height:18px;background:#ede9a6"></div>
<div style="left:893px;top:134px;width:1px;height:684px;background:#f0b4b4"></div>
<div style="left:253px;top:137px;font-family:'Liberation Mono', monospace;font-size:13.333px;line-height:16.000px;color:#000">    <span class="k">private</span> <span class="k">void</span> <span class="b">jButton2ActionPerformed</span>(java.awt.event.ActionEvent evt) {</div>
<div style="left:199px;top:138px;font-family:'Liberation Mono', monospace;font-size:12px;line-height:14.400px;color:#222">180</div>
<div style="left:199px;top:156px;font-family:'Liberation Mono', monospace;font-size:12px;line-height:14.400px;color:#222">181</div>
<div style="left:253px;top:173px;font-family:'Liberation Mono', monospace;font-size:13.333px;line-height:16.000px;color:#000">        Thread hilo = <span class="k">new</span> Thread() {</div>
<div style="left:199px;top:174px;font-family:'Liberation Mono', monospace;font-size:12px;line-height:14.400px;color:#222">182</div>
<div style="left:253px;top:191px;font-family:'Liberation Mono', monospace;font-size:13.333px;line-height:16.000px;color:#000">            <span class="k">public</span> <span class="k">void</span> <span class="b">run</span>() {</div>
<div style="left:253px;top:209px;font-family:'Liberation Mono', monospace;font-size:13.333px;line-height:16.000px;color:#000">                <span class="k">for</span> (;;) {</div>
<div style="left:199px;top:210px;font-family:'Liberation Mono', monospace;font-size:12px;line-height:14.400px;color:#222">184</div>
<div style="left:253px;top:227px;font-family:'Liberation Mono', monospace;font-size:13.333px;line-height:16.000px;color:#000">                    <span class="k">if</span> (<span class="f">estado</span> == <span class="k">true</span>) {</div>
<div style="left:199px;top:228px;font-family:'Liberation Mono', monospace;font-size:12px;line-height:14.400px;color:#222">185</div>
<div style="left:253px;top:245px;font-family:'Liberation Mono', monospace;font-size:13.333px;line-height:16.000px;color:#000">                        <span class="k">try</span> {</div>
<div style="left:199px;top:246px;font-family:'Liberation Mono', monospace;font-size:12px;line-height:14.400px;color:#222">186</div>
<div style="left:253px;top:263px;font-family:'Liberation Mono', monospace;font-size:13.333px;line-height:16.000px;color:#000">                            <span class="i">sleep</span>(1);</div>
<div style="left:253px;top:281px;font-family:'Liberation Mono', monospace;font-size:13.333px;line-height:16.000px;color:#000">                            <span class="k">if</span> (<span class="f">miliseg</span> &gt;= 1000) {</div>
<div style="left:199px;top:282px;font-family:'Liberation Mono', monospace;font-size:12px;line-height:14.400px;color:#222">188</div>
<div style="left:253px;top:299px;font-family:'Liberation Mono', monospace;font-size:13.333px;line-height:16.000px;color:#000">                                <span class="f">miliseg</span> = 0;</div>
<div style="left:199px;top:300px;font-family:'Liberation Mono', monospace;font-size:12px;line-height:14.400px;color:#222">189</div>
<div style="left:253px;top:317px;font-family:'Liberation Mono', monospace;font-size:13.333px;line-height:16.000px;color:#000">                                <span class="f">seg</span>++;</div>
<div style="left:199px;top:318px;font-family:'Liberation Mono', monospace;font-size:12px;line-height:14.400px;color:#222">190</div>
<div style="left:253px;top:335px;font-family:'Liberation Mono', monospace;font-size:13.333px;line-height:16.000px;color:#000">                            }</div>
<div style="left:199px;top:336px;font-family:'Liberation Mono', monospace;font-size:12px;line-height:14.400px;color:#222">191</div>
<div style="left:253px;top:353px;font-family:'Liberation Mono', monospace;font-size:13.333px;line-height:16.000px;color:#000">                            <span class="f">jLbl_tempo</span>.setText(Integer.<span class="i">toString</span>(<span class="f">seg</span>));</div>
<div style="left:199px;top:354px;font-family:'Liberation Mono', monospace;font-size:12px;line-height:14.400px;color:#222">192</div>
<div style="left:253px;top:371px;font-family:'Liberation Mono', monospace;font-size:13.333px;line-height:16.000px;color:#000">                            <span class="f">miliseg</span>++;</div>
<div style="left:199px;top:372px;font-family:'Liberation Mono', monospace;font-size:12px;line-height:14.400px;color:#222">193</div>
<div style="left:253px;top:389px;font-family:'Liberation Mono', monospace;font-size:13.333px;line-height:16.000px;color:#000">                            <span class="k">if</span> (<span class="f">min</span> == 0) {</div>
<div style="left:199px;top:390px;font-family:'Liberation Mono', monospace;font-size:12px;line-height:14.400px;color:#222">194</div>
<div style="left:253px;top:407px;font-family:'Liberation Mono', monospace;font-size:13.333px;line-height:16.000px;color:#000">                                <span class="k">if</span> (<span class="f">seg</span> == 10) {</div>
<div style="left:199px;top:408px;font-family:'Liberation Mono', monospace;font-size:12px;line-height:14.400px;color:#222">195</div>
<div style="left:253px;top:425px;font-family:'Liberation Mono', monospace;font-size:13.333px;line-height:16.000px;color:#000">                                    <span class="f">estado</span> = <span class="k">false</span>;</div>
<div style="left:199px;top:426px;font-family:'Liberation Mono', monospace;font-size:12px;line-height:14.400px;color:#222">196</div>
<div style="left:253px;top:443px;font-family:'Liberation Mono', monospace;font-size:13.333px;line-height:16.000px;color:#000">                                    <span class="k">this</span>.<span class="i">dispose</span>();</div>
<div style="left:253px;top:461px;font-family:'Liberation Mono', monospace;font-size:13.333px;line-height:16.000px;color:#000">                                    TelaLose tl = <span class="k">new</span> TelaLose();</div>
<div style="left:199px;top:462px;font-family:'Liberation Mono', monospace;font-size:12px;line-height:14.400px;color:#222">198</div>
<div style="left:253px;top:479px;font-family:'Liberation Mono', monospace;font-size:13.333px;line-height:16.000px;color:#000">                                    tl.setExtendedState(TelaLose.<span class="f i">MAXIMIZED_BOTH</span>);</div>
<div style="left:199px;top:480px;font-family:'Liberation Mono', monospace;font-size:12px;line-height:14.400px;color:#222">199</div>
<div style="left:253px;top:497px;font-family:'Liberation Mono', monospace;font-size:13.333px;line-height:16.000px;color:#000">                                    tl.setVisible(<span class="k">true</span>);</div>
<div style="left:199px;top:498px;font-family:'Liberation Mono', monospace;font-size:12px;line-height:14.400px;color:#222">200</div>
<div style="left:253px;top:515px;font-family:'Liberation Mono', monospace;font-size:13.333px;line-height:16.000px;color:#000">                                }</div>
<div style="left:199px;top:516px;font-family:'Liberation Mono', monospace;font-size:12px;line-height:14.400px;color:#222">201</div>
<div style="left:253px;top:533px;font-family:'Liberation Mono', monospace;font-size:13.333px;line-height:16.000px;color:#000">                            }</div>
<div style="left:199px;top:534px;font-family:'Liberation Mono', monospace;font-size:12px;line-height:14.400px;color:#222">202</div>
<div style="left:253px;top:551px;font-family:'Liberation Mono', monospace;font-size:13.333px;line-height:16.000px;color:#000">                        } <span class="k">catch</span> (Exception e) {</div>
<div style="left:199px;top:552px;font-family:'Liberation Mono', monospace;font-size:12px;line-height:14.400px;color:#222">203</div>
<div style="left:199px;top:570px;font-family:'Liberation Mono', monospace;font-size:12px;line-height:14.400px;color:#222">204</div>
<div style="left:253px;top:587px;font-family:'Liberation Mono', monospace;font-size:13.333px;line-height:16.000px;color:#000">                        }</div>
<div style="left:199px;top:588px;font-family:'Liberation Mono', monospace;font-size:12px;line-height:14.400px;color:#222">205</div>
<div style="left:253px;top:605px;font-family:'Liberation Mono', monospace;font-size:13.333px;line-height:16.000px;color:#000">                    } <span class="k">else</span> {</div>
<div style="left:199px;top:606px;font-family:'Liberation Mono', monospace;font-size:12px;line-height:14.400px;color:#222">206</div>
<div style="left:253px;top:623px;font-family:'Liberation Mono', monospace;font-size:13.333px;line-height:16.000px;color:#000">                        <span class="k">break</span>;</div>
<div style="left:199px;top:624px;font-family:'Liberation Mono', monospace;font-size:12px;line-height:14.400px;color:#222">207</div>
<div style="left:253px;top:641px;font-family:'Liberation Mono', monospace;font-size:13.333px;line-height:16.000px;color:#000">                    }</div>
<div style="left:199px;top:642px;font-family:'Liberation Mono', monospace;font-size:12px;line-height:14.400px;color:#222">208</div>
<div style="left:253px;top:659px;font-family:'Liberation Mono', monospace;font-size:13.333px;line-height:16.000px;color:#000">                }</div>
<div style="left:199px;top:660px;font-family:'Liberation Mono', monospace;font-size:12px;line-height:14.400px;color:#222">209</div>
<div style="left:199px;top:678px;font-family:'Liberation Mono', monospace;font-size:12px;line-height:14.400px;color:#222">210</div>
<div style="left:253px;top:695px;font-family:'Liberation Mono', monospace;font-size:13.333px;line-height:16.000px;color:#000">            }</div>
<div style="left:199px;top:696px;font-family:'Liberation Mono', monospace;font-size:12px;line-height:14.400px;color:#222">211</div>
<div style="left:253px;top:713px;font-family:'Liberation Mono', monospace;font-size:13.333px;line-height:16.000px;color:#000">        };</div>
<div style="left:199px;top:714px;font-family:'Liberation Mono', monospace;font-size:12px;line-height:14.400px;color:#222">212</div>
<div style="left:253px;top:731px;font-family:'Liberation Mono', monospace;font-size:13.333px;line-height:16.000px;color:#000">        hilo.start();</div>
<div style="left:199px;top:732px;font-family:'Liberation Mono', monospace;font-size:12px;line-height:14.400px;color:#222">213</div>
<div style="left:199px;top:750px;font-family:'Liberation Mono', monospace;font-size:12px;line-height:14.400px;color:#222">214</div>
<div style="left:253px;top:767px;font-family:'Liberation Mono', monospace;font-size:13.333px;line-height:16.000px;color:#000">    }</div>
<div style="left:199px;top:768px;font-family:'Liberation Mono', monospace;font-size:12px;line-height:14.400px;color:#222">215</div>
<div style="left:199px;top:786px;font-family:'Liberation Mono', monospace;font-size:12px;line-height:14.400px;color:#222">216</div>
<div style="left:253px;top:803px;font-family:'Liberation Mono', monospace;font-size:13.333px;line-height:16.000px;color:#000">    <span class="k">private</span> <span class="k">void</span> <span class="b">jButton1ActionPerformed</span>(java.awt.event.ActionEvent evt) {</div>
<div style="left:199px;top:804px;font-family:'Liberation Mono', monospace;font-size:12px;line-height:14.400px;color:#222">217</div>
<svg style="left:445px;top:203px;" width="32" height="3" viewBox="0 0 32 3"><path d="M0 2 L1 2 L2 0 L3 0 L4 2 L5 2 L6 0 L7 0 L8 2 L9 2 L10 0 L11 0 L12 2 L13 2 L14 0 L15 0 L16 2 L17 2 L18 0 L19 0 L20 2 L21 2 L22 0 L23 0 L24 2 L25 2 L26 0 L27 0 L28 2 L29 2 L30 0 L31 0 L32 2" fill="none" stroke="#e8d040" stroke-width="0.9"/></svg>
<svg style="left:477px;top:275px;" width="40" height="3" viewBox="0 0 40 3"><path d="M0 2 L1 2 L2 0 L3 0 L4 2 L5 2 L6 0 L7 0 L8 2 L9 2 L10 0 L11 0 L12 2 L13 2 L14 0 L15 0 L16 2 L17 2 L18 0 L19 0 L20 2 L21 2 L22 0 L23 0 L24 2 L25 2 L26 0 L27 0 L28 2 L29 2 L30 0 L31 0 L32 2 L33 2 L34 0 L35 0 L36 2 L37 2 L38 0 L39 0 L40 2" fill="none" stroke="#e8d040" stroke-width="0.9"/></svg>
<svg style="left:541px;top:455px;" width="120" height="3" viewBox="0 0 120 3"><path d="M0 2 L1 2 L2 0 L3 0 L4 2 L5 2 L6 0 L7 0 L8 2 L9 2 L10 0 L11 0 L12 2 L13 2 L14 0 L15 0 L16 2 L17 2 L18 0 L19 0 L20 2 L21 2 L22 0 L23 0 L24 2 L25 2 L26 0 L27 0 L28 2 L29 2 L30 0 L31 0 L32 2 L33 2 L34 0 L35 0 L36 2 L37 2 L38 0 L39 0 L40 2 L41 2 L42 0 L43 0 L44 2 L45 2 L46 0 L47 0 L48 2 L49 2 L50 0 L51 0 L52 2 L53 2 L54 0 L55 0 L56 2 L57 2 L58 0 L59 0 L60 2 L61 2 L62 0 L63 0 L64 2 L65 2 L66 0 L67 0 L68 2 L69 2 L70 0 L71 0 L72 2 L73 2 L74 0 L75 0 L76 2 L77 2 L78 0 L79 0 L80 2 L81 2 L82 0 L83 0 L84 2 L85 2 L86 0 L87 0 L88 2 L89 2 L90 0 L91 0 L92 2 L93 2 L94 0 L95 0 L96 2 L97 2 L98 0 L99 0 L100 2 L101 2 L102 0 L103 0 L104 2 L105 2 L106 0 L107 0 L108 2 L109 2 L110 0 L111 0 L112 2 L113 2 L114 0 L115 0 L116 2 L117 2 L118 0 L119 0 L120 2" fill="none" stroke="#e02020" stroke-width="0.9"/></svg>
<svg style="left:797px;top:149px;" width="24" height="3" viewBox="0 0 24 3"><path d="M0 2 L1 2 L2 0 L3 0 L4 2 L5 2 L6 0 L7 0 L8 2 L9 2 L10 0 L11 0 L12 2 L13 2 L14 0 L15 0 L16 2 L17 2 L18 0 L19 0 L20 2 L21 2 L22 0 L23 0 L24 2" fill="none" stroke="#a0a0a0" stroke-width="0.9"/></svg>
<svg style="left:597px;top:563px;" width="8" height="3" viewBox="0 0 8 3"><path d="M0 2 L1 2 L2 0 L3 0 L4 2 L5 2 L6 0 L7 0 L8 2" fill="none" stroke="#a0a0a0" stroke-width="0.9"/></svg>
<div style="left:236px;top:149px;width:1px;height:624px;background:#666"></div>
<div style="left:236px;top:773px;width:6px;height:1px;background:#666"></div>
<div style="left:236px;top:701px;width:6px;height:1px;background:#666"></div>
<div style="left:236px;top:719px;width:6px;height:1px;background:#666"></div>
<div style="left:236px;top:815px;width:1px;height:3px;background:#666"></div>
<svg style="left:231px;top:138px;" width="11" height="11" viewBox="0 0 11 11"><rect x="0.5" y="0.5" width="10" height="10" fill="#fff" stroke="#555"/><path d="M3 5.5 H8" stroke="#333"/></svg>
<svg style="left:231px;top:174px;" width="11" height="11" viewBox="0 0 11 11"><rect x="0.5" y="0.5" width="10" height="10" fill="#fff" stroke="#555"/><path d="M3 5.5 H8" stroke="#333"/></svg>
<svg style="left:231px;top:192px;" width="11" height="11" viewBox="0 0 11 11"><rect x="0.5" y="0.5" width="10" height="10" fill="#fff" stroke="#555"/><path d="M3 5.5 H8" stroke="#333"/></svg>
<svg style="left:231px;top:804px;" width="11" height="11" viewBox="0 0 11 11"><rect x="0.5" y="0.5" width="10" height="10" fill="#fff" stroke="#555"/><path d="M3 5.5 H8" stroke="#333"/></svg>
<svg style="left:202px;top:191px;" width="15" height="15" viewBox="0 0 15 15"><path d="M6 1 C3 1 1.2 3 1.2 5.6 C1.2 7.6 2.6 8.6 3.3 10 L8.7 10 C9.4 8.6 10.8 7.6 10.8 5.6 C10.8 3 9 1 6 1 Z" fill="#f4e060" stroke="#8a7410" stroke-width="1.1"/><ellipse cx="5.5" cy="4" rx="2.2" ry="1.6" fill="#fff8c0"/><rect x="3.6" y="10.2" width="4.6" height="2.6" fill="#d8d8c0" stroke="#444" stroke-width="0.8"/><path d="M9.5 6.5 L14.3 13.6 L4.7 13.6 Z" fill="#f2e040" stroke="#7a6400" stroke-width="1"/><path d="M9.5 9 V11.6" stroke="#000" stroke-width="1.3"/></svg>
<svg style="left:215px;top:191px;" width="8" height="13" viewBox="0 0 8 13"><path d="M2.3 0.5 H5.7 M2.3 2.6 H5.7" stroke="#000" stroke-width="1"/><rect x="2.4" y="4.3" width="3.2" height="5" fill="#000"/><path d="M0 8.3 H8 L4 12.6 Z" fill="#000"/></svg>
<svg style="left:210px;top:263px;" width="15" height="15" viewBox="0 0 15 15"><path d="M6 1 C3 1 1.2 3 1.2 5.6 C1.2 7.6 2.6 8.6 3.3 10 L8.7 10 C9.4 8.6 10.8 7.6 10.8 5.6 C10.8 3 9 1 6 1 Z" fill="#f4e060" stroke="#8a7410" stroke-width="1.1"/><ellipse cx="5.5" cy="4" rx="2.2" ry="1.6" fill="#fff8c0"/><rect x="3.6" y="10.2" width="4.6" height="2.6" fill="#d8d8c0" stroke="#444" stroke-width="0.8"/><path d="M9.5 6.5 L14.3 13.6 L4.7 13.6 Z" fill="#f2e040" stroke="#7a6400" stroke-width="1"/><path d="M9.5 9 V11.6" stroke="#000" stroke-width="1.3"/></svg>
<svg style="left:210px;top:443px;" width="15" height="15" viewBox="0 0 15 15"><path d="M6 1 C3 1 1.2 3 1.2 5.6 C1.2 7.6 2.6 8.6 3.3 10 L8.7 10 C9.4 8.6 10.8 7.6 10.8 5.6 C10.8 3 9 1 6 1 Z" fill="#f4e060" stroke="#8a7410" stroke-width="1.1"/><ellipse cx="5.5" cy="4" rx="2.2" ry="1.6" fill="#fff8c0"/><rect x="3.6" y="10.2" width="4.6" height="2.6" fill="#d8d8c0" stroke="#444" stroke-width="0.8"/><circle cx="10.5" cy="11" r="3.2" fill="#e01818" stroke="#900" stroke-width="0.6"/><path d="M10.5 9.4 V11.4" stroke="#fff" stroke-width="1.1"/></svg>
<div style="left:1566px;top:134px;width:30px;height:684px;background:#efefef"></div>
<svg style="left:1569px;top:139px;" width="10" height="8" viewBox="0 0 10 8"><path d="M1 6 L5 2 L9 6" fill="none" stroke="#444" stroke-width="1.6"/></svg>
<svg style="left:1569px;top:805px;" width="10" height="8" viewBox="0 0 10 8"><path d="M1 2 L5 6 L9 2" fill="none" stroke="#444" stroke-width="1.6"/></svg>
<div style="left:1567px;top:322px;width:15px;height:156px;background:#cdcdcd"></div>
<div style="left:1586px;top:142px;width:7px;height:7px;background:#f02010"></div>
<div style="left:1584px;top:338px;width:11px;height:2px;background:#f2c21a"></div>
<div style="left:1584px;top:342px;width:11px;height:2px;background:#a8a878"></div>
<div style="left:1584px;top:355px;width:11px;height:2px;background:#f2c21a"></div>
<div style="left:1584px;top:394px;width:11px;height:2px;background:#c02020"></div>
<div style="left:1584px;top:442px;width:11px;height:2px;background:#a8a878"></div>
<div style="left:1584px;top:606px;width:11px;height:2px;background:#f2c21a"></div>
<div style="left:1584px;top:654px;width:11px;height:2px;background:#f2c21a"></div>
<div style="left:1584px;top:658px;width:11px;height:2px;background:#f2c21a"></div>
<div style="left:253px;top:818px;width:1343px;height:17px;background:#efefef"></div>
<svg style="left:257px;top:821px;" width="8" height="10" viewBox="0 0 8 10"><path d="M6 1 L2 5 L6 9" fill="none" stroke="#444" stroke-width="1.6"/></svg>
<svg style="left:1553px;top:821px;" width="8" height="10" viewBox="0 0 8 10"><path d="M2 1 L6 5 L2 9" fill="none" stroke="#444" stroke-width="1.6"/></svg>
<div style="left:270px;top:819px;width:662px;height:15px;background:#cdcdcd"></div>
<div style="left:1462px;top:842px;width:1px;height:14px;background:#a0a0a0"></div>
<div style="left:1573px;top:842px;width:1px;height:14px;background:#a0a0a0"></div>
<div style="left:1503px;top:843px;font-family:'Liberation Sans', sans-serif;font-size:11px;line-height:13.200px;color:#000;letter-spacing:0.1px">197:37</div>
<div style="left:1578px;top:843px;font-family:'Liberation Sans', sans-serif;font-size:11px;line-height:13.200px;color:#000;letter-spacing:-0.6px">INS</div>
<div style="left:0px;top:860px;width:1600px;height:40px;background:#000"></div>
<svg style="left:16px;top:872px;" width="17" height="17" viewBox="0 0 17 17"><path d="M0 2.3 L7 1.3 V8 H0 Z M8 1.1 L16.5 0 V8 H8 Z M0 9 H7 V15.7 L0 14.7 Z M8 9 H16.5 V17 L8 15.9 Z" fill="#fff"/></svg>
<div style="left:48px;top:860px;width:344px;height:40px;background:#f2f2f2;border-top:1px solid #cfcfcf"></div>
<svg style="left:56px;top:868px;" width="24" height="24" viewBox="0 0 24 24"><circle cx="12" cy="12" r="9.5" fill="none" stroke="#000" stroke-width="2.4"/></svg>
<div style="left:88px;top:873px;font-family:'Liberation Sans', sans-serif;font-size:15px;line-height:18.000px;color:#2b2b2b">Digite aqui para pesquisar</div>
<svg style="left:364px;top:870px;" width="14" height="20" viewBox="0 0 14 20"><rect x="4" y="1" width="6" height="11" rx="3" fill="none" stroke="#333" stroke-width="1.3"/><path d="M2 8 C2 14 12 14 12 8 M7 13 V17 M4 17.5 H10" fill="none" stroke="#333" stroke-width="1.3"/></svg>
<svg style="left:407px;top:866px;" width="26" height="26" viewBox="0 0 26 26"><path d="M3 13 C3 5 9 2 14 2 C20 2 24 6 24 12 V14 H9 C9.5 18.5 13 20 16 20 C19 20 21.5 19 23 18 V22.5 C21 23.8 18 24.5 15 24.5 C8 24.5 3 20 3 13 Z M9.3 10.5 H18 C18 8 16.5 6.3 13.8 6.3 C11.3 6.3 9.7 8 9.3 10.5 Z" fill="#1e78d8"/></svg>
<svg style="left:454px;top:867px;" width="26" height="24" viewBox="0 0 26 24"><path d="M2 3 H10 L12 5 H24 V21 H2 Z" fill="#f0c850"/><path d="M2 8 H24 V21 H2 Z" fill="#fde08a"/><rect x="8" y="14" width="10" height="7" fill="#2f9be0"/><rect x="10" y="12" width="6" height="3" fill="#2f9be0"/></svg>
<svg style="left:503px;top:865px;" width="26" height="28" viewBox="0 0 26 28"><path d="M9 7 C9 2 17 2 17 7" fill="none" stroke="#fff" stroke-width="1.6"/><path d="M3 7 H23 L22 25 H4 Z" fill="#fff"/><rect x="8.5" y="11" width="4" height="4" fill="#000"/><rect x="13.5" y="11" width="4" height="4" fill="#000"/><rect x="8.5" y="16" width="4" height="4" fill="#000"/><rect x="13.5" y="16" width="4" height="4" fill="#000"/></svg>
<svg style="left:553px;top:869px;" width="26" height="20" viewBox="0 0 26 20"><path d="M1 6 L13 1 L25 6 V19 H1 Z" fill="#fff"/><path d="M1 6 L13 13 L25 6" fill="none" stroke="#000" stroke-width="1.5"/><path d="M1 19 L10 11 M25 19 L16 11" stroke="#000" stroke-width="1"/></svg>
<div style="left:591px;top:860px;width:48px;height:40px;background:#3d3d3d"></div>
<div style="left:591px;top:898px;width:48px;height:2px;background:#7aaee0"></div>
<svg style="left:601px;top:866px;" width="28" height="28" viewBox="0 0 28 28"><path d="M14 1.5 L25 7 V21 L14 26.5 L3 21 V7 Z" fill="#90a8d8" stroke="#2a3a6a" stroke-width="1"/><path d="M14 2.5 L24 7.3 L14 12.3 L4 7.3 Z" fill="#e8f0fb"/><path d="M14 12.5 L24 7.6 V20.5 L14 25.5 Z" fill="#c4d6ef"/><path d="M14 12.5 V25.5 L4 20.5 V7.6 Z" fill="#8aa4d8"/></svg>
<svg style="left:649px;top:866px;" width="28" height="28" viewBox="0 0 28 28"><rect x="1" y="1" width="26" height="26" rx="2" fill="#1c4d72"/><path d="M5 22 C8 14 10 10 14 9 C17 8 19 6 21 4 M14 9 C16 13 18 16 22 20 M10 14 L13 20" fill="none" stroke="#bcd7ea" stroke-width="1.4"/></svg>
<svg style="left:698px;top:866px;" width="28" height="28" viewBox="0 0 28 28"><circle cx="14" cy="14" r="13" fill="#db4437"/><path d="M14 14 L2.7 20.5 A13 13 0 0 1 3.8 5.8 Z" fill="#0f9d58"/><path d="M14 14 L25.3 7.5 A13 13 0 0 1 2.7 20.5 Z" fill="#0f9d58"/><path d="M14 14 L14 27 A13 13 0 0 0 25.3 7.5 Z" fill="#ffcd40"/><circle cx="14" cy="14" r="6" fill="#fff"/><circle cx="14" cy="14" r="4.7" fill="#4285f4"/></svg>
<div style="left:693px;top:898px;width:40px;height:2px;background:#7aaee0"></div>
<svg style="left:1336px;top:871px;" width="18" height="18" viewBox="0 0 18 18"><circle cx="12" cy="4.5" r="3" fill="none" stroke="#fff" stroke-width="1.2"/><path d="M7 13 C7 9 17 9 17 13" fill="none" stroke="#fff" stroke-width="1.2"/><circle cx="6.5" cy="9" r="3" fill="#000" stroke="#fff" stroke-width="1.2"/><path d="M1 17.5 C1 13 12 13 12 17.5" fill="none" stroke="#fff" stroke-width="1.2"/></svg>
<svg style="left:1374px;top:876px;" width="14" height="8" viewBox="0 0 14 8"><path d="M1 7 L7 1 L13 7" fill="none" stroke="#fff" stroke-width="1.3"/></svg>
<svg style="left:1397px;top:873px;" width="18" height="15" viewBox="0 0 18 15"><rect x="4.5" y="2.5" width="12" height="9" fill="none" stroke="#fff"/><path d="M10.5 11.5 V14 M7 14.5 H14" stroke="#fff"/><rect x="0.5" y="0.5" width="4" height="4" fill="#000" stroke="#fff"/></svg>
<svg style="left:1421px;top:873px;" width="18" height="15" viewBox="0 0 18 15"><path d="M1 5 H4 L8 1.5 V13.5 L4 10 H1 Z" fill="none" stroke="#fff" stroke-width="1.1"/><path d="M10.5 5 C11.5 6.5 11.5 8.5 10.5 10 M12.8 3.3 C14.8 5.5 14.8 9.5 12.8 11.7 M15 1.8 C17.8 5 17.8 10 15 13.2" fill="none" stroke="#fff" stroke-width="1"/></svg>
<div style="left:1447px;top:865px;font-family:'Liberation Sans', sans-serif;font-size:12px;line-height:14.400px;color:#fff;letter-spacing:-1px">POR</div>
<div style="left:1445px;top:882px;font-family:'Liberation Sans', sans-serif;font-size:12px;line-height:14.400px;color:#fff;letter-spacing:-0.9px">PTB2</div>
<div style="left:1499px;top:865px;font-family:'Liberation Sans', sans-serif;font-size:12px;line-height:14.400px;color:#fff;letter-spacing:-0.6px">11:19</div>
<div style="left:1482px;top:882px;font-family:'Liberation Sans', sans-serif;font-size:12px;line-height:14.400px;color:#fff;letter-spacing:-0.2px">06/09/2018</div>
<svg style="left:1558px;top:872px;" width="18" height="17" viewBox="0 0 18 17"><path d="M1 1 H17 V12 H11 L9 15 L7 12 H1 Z" fill="none" stroke="#fff" stroke-width="1.1"/></svg>
<div style="left:1595px;top:860px;width:1px;height:40px;background:#555"></div>
</body></html>
